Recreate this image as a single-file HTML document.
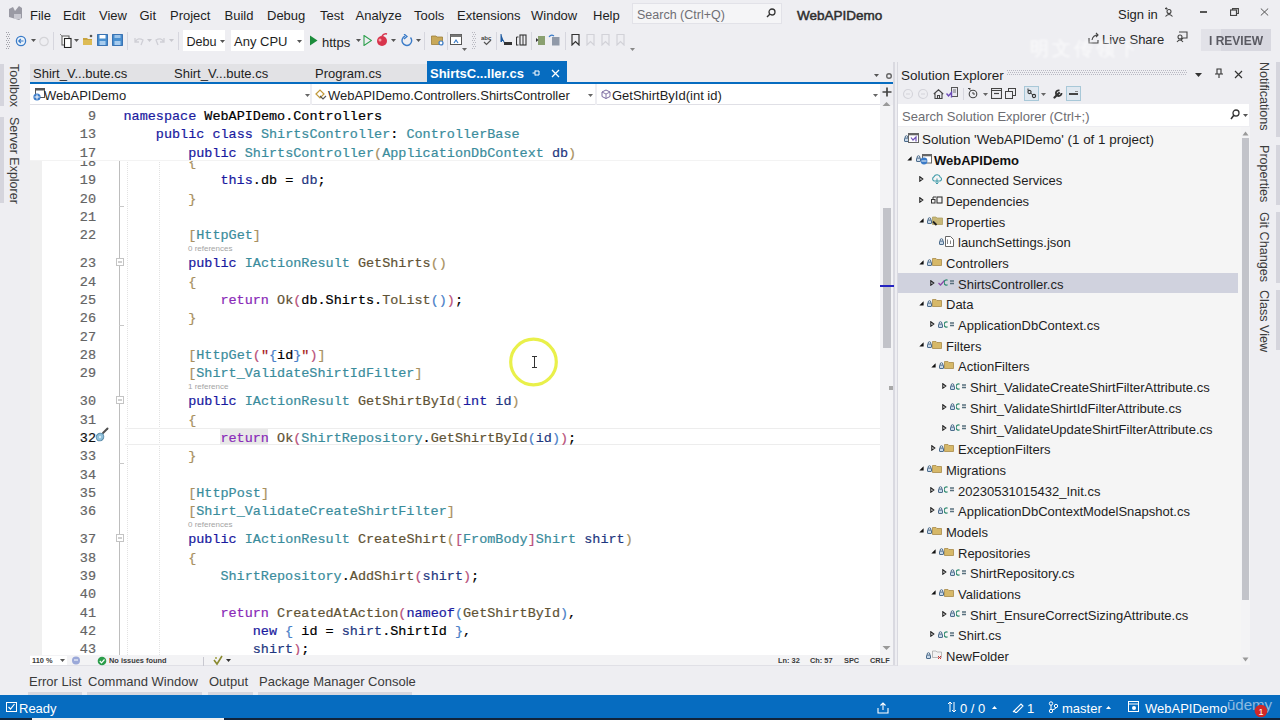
<!DOCTYPE html>
<html><head><meta charset="utf-8"><style>
html,body{margin:0;padding:0;}
body{width:1280px;height:720px;overflow:hidden;position:relative;background:#EEEEF2;font-family:"Liberation Sans",sans-serif;}
.r{position:absolute;}
.t{position:absolute;white-space:pre;line-height:0;height:0;}
.t span{display:inline-block;line-height:normal;transform:translateY(-78%);}
.code{position:absolute;white-space:pre;font-family:"Liberation Mono",monospace;font-size:13.47px;line-height:0;height:0;-webkit-text-stroke:0.2px;}
.code span.l{display:inline-block;line-height:normal;transform:translateY(-78%);}
</style></head><body>

<svg class="r" style="left:7px;top:5px;" width="16" height="16" viewBox="0 0 16 16"><path d="M2 4 L6 2 L8 6 L12 1 L15 3 L15 13 L12 15 L2 12 Z" fill="#9a9aa4"/><rect x="7" y="9" width="7" height="5" fill="#c8c8d0"/></svg>
<div class="t" style="left:30px;top:19.5px;font-size:13px;color:#1e1e1e;font-weight:normal;font-family:'Liberation Sans', sans-serif;"><span>File</span></div>
<div class="t" style="left:63px;top:19.5px;font-size:13px;color:#1e1e1e;font-weight:normal;font-family:'Liberation Sans', sans-serif;"><span>Edit</span></div>
<div class="t" style="left:99px;top:19.5px;font-size:13px;color:#1e1e1e;font-weight:normal;font-family:'Liberation Sans', sans-serif;"><span>View</span></div>
<div class="t" style="left:139.5px;top:19.5px;font-size:13px;color:#1e1e1e;font-weight:normal;font-family:'Liberation Sans', sans-serif;"><span>Git</span></div>
<div class="t" style="left:170px;top:19.5px;font-size:13px;color:#1e1e1e;font-weight:normal;font-family:'Liberation Sans', sans-serif;"><span>Project</span></div>
<div class="t" style="left:224.5px;top:19.5px;font-size:13px;color:#1e1e1e;font-weight:normal;font-family:'Liberation Sans', sans-serif;"><span>Build</span></div>
<div class="t" style="left:267px;top:19.5px;font-size:13px;color:#1e1e1e;font-weight:normal;font-family:'Liberation Sans', sans-serif;"><span>Debug</span></div>
<div class="t" style="left:320px;top:19.5px;font-size:13px;color:#1e1e1e;font-weight:normal;font-family:'Liberation Sans', sans-serif;"><span>Test</span></div>
<div class="t" style="left:355.5px;top:19.5px;font-size:13px;color:#1e1e1e;font-weight:normal;font-family:'Liberation Sans', sans-serif;"><span>Analyze</span></div>
<div class="t" style="left:414px;top:19.5px;font-size:13px;color:#1e1e1e;font-weight:normal;font-family:'Liberation Sans', sans-serif;"><span>Tools</span></div>
<div class="t" style="left:457px;top:19.5px;font-size:13px;color:#1e1e1e;font-weight:normal;font-family:'Liberation Sans', sans-serif;"><span>Extensions</span></div>
<div class="t" style="left:531px;top:19.5px;font-size:13px;color:#1e1e1e;font-weight:normal;font-family:'Liberation Sans', sans-serif;"><span>Window</span></div>
<div class="t" style="left:593px;top:19.5px;font-size:13px;color:#1e1e1e;font-weight:normal;font-family:'Liberation Sans', sans-serif;"><span>Help</span></div>
<div class="r" style="left:632px;top:3px;width:150px;height:21px;background:#F5F5F7;box-sizing:border-box;border:1px solid #E2E2E8;"></div>
<div class="t" style="left:637px;top:19px;font-size:12.5px;color:#6f6f75;font-weight:normal;font-family:'Liberation Sans', sans-serif;"><span>Search (Ctrl+Q)</span></div>
<svg class="r" style="left:765px;top:7px;" width="12" height="12" viewBox="0 0 12 12"><circle cx="7" cy="5" r="3" fill="none" stroke="#333" stroke-width="1.3"/><line x1="5" y1="7" x2="2" y2="10" stroke="#333" stroke-width="1.5"/></svg>
<div class="t" style="left:797px;top:20px;font-size:13.5px;color:#2e2e2e;font-weight:normal;font-family:'Liberation Sans', sans-serif;-webkit-text-stroke:0.5px #2e2e2e;"><span>WebAPIDemo</span></div>
<div class="t" style="left:1118px;top:19px;font-size:13px;color:#1e1e1e;font-weight:normal;font-family:'Liberation Sans', sans-serif;"><span>Sign in</span></div>
<svg class="r" style="left:1164px;top:7px;" width="10" height="10" viewBox="0 0 10 10"><circle cx="5" cy="4.5" r="2" fill="none" stroke="#444" stroke-width="1.1"/><path d="M1.5 9.5 Q5 5.5 8.5 9.5" fill="none" stroke="#444" stroke-width="1.1"/><path d="M1 1.5 L3.5 1.5 M2.25 0.3 L2.25 2.7" stroke="#444" stroke-width="1"/></svg>
<div class="r" style="left:1200px;top:11px;width:7px;height:1.5px;background:#555;"></div>
<svg class="r" style="left:1230px;top:8px;" width="9" height="8" viewBox="0 0 9 8"><rect x="0.5" y="2" width="6" height="5.5" fill="none" stroke="#444" stroke-width="1.2"/><path d="M2.5 2 V0.6 H8.4 V5.5 H6.5" fill="none" stroke="#444" stroke-width="1.1"/></svg>
<svg class="r" style="left:1260px;top:8px;" width="9" height="8" viewBox="0 0 9 8"><path d="M0.8 0.5 L8.2 7.5 M8.2 0.5 L0.8 7.5" stroke="#555" stroke-width="1"/></svg>
<svg class="r" style="left:6px;top:32px;" width="4" height="18" viewBox="0 0 4 18"><rect x="0" y="0" width="1" height="1" fill="#A0A0A8"/><rect x="2" y="0" width="1" height="1" fill="#A0A0A8"/><rect x="1" y="2" width="1" height="1" fill="#A0A0A8"/><rect x="3" y="2" width="1" height="1" fill="#A0A0A8"/><rect x="0" y="4" width="1" height="1" fill="#A0A0A8"/><rect x="2" y="4" width="1" height="1" fill="#A0A0A8"/><rect x="1" y="6" width="1" height="1" fill="#A0A0A8"/><rect x="3" y="6" width="1" height="1" fill="#A0A0A8"/><rect x="0" y="8" width="1" height="1" fill="#A0A0A8"/><rect x="2" y="8" width="1" height="1" fill="#A0A0A8"/><rect x="1" y="10" width="1" height="1" fill="#A0A0A8"/><rect x="3" y="10" width="1" height="1" fill="#A0A0A8"/><rect x="0" y="12" width="1" height="1" fill="#A0A0A8"/><rect x="2" y="12" width="1" height="1" fill="#A0A0A8"/><rect x="1" y="14" width="1" height="1" fill="#A0A0A8"/><rect x="3" y="14" width="1" height="1" fill="#A0A0A8"/><rect x="0" y="16" width="1" height="1" fill="#A0A0A8"/><rect x="2" y="16" width="1" height="1" fill="#A0A0A8"/></svg>
<svg class="r" style="left:15px;top:35px;" width="12" height="12" viewBox="0 0 12 12"><circle cx="6" cy="6" r="4.6" fill="#EAF2FA" stroke="#3A7BC8" stroke-width="1.3"/><path d="M8.5 6 H4 M5.8 4 L3.8 6 L5.8 8" fill="none" stroke="#3A7BC8" stroke-width="1.2"/></svg>
<svg class="r" style="left:31px;top:39px;" width="5" height="3" viewBox="0 0 5 3"><path d="M0 0 H5 L2.5 3 Z" fill="#555"/></svg>
<svg class="r" style="left:38px;top:35px;" width="12" height="12" viewBox="0 0 12 12"><circle cx="6" cy="6.5" r="4.2" fill="none" stroke="#D4D4D8" stroke-width="1.2"/></svg>
<div class="r" style="left:53px;top:32px;width:1px;height:18px;background:#D6D6DE;"></div>
<svg class="r" style="left:59px;top:33px;" width="13" height="15" viewBox="0 0 13 15"><rect x="3" y="3" width="7" height="9" fill="#fff" stroke="#555" stroke-width="1"/><rect x="5.5" y="5.5" width="6.5" height="9" fill="#fff" stroke="#222" stroke-width="1.1"/><path d="M1 1 L3 3" stroke="#888"/></svg>
<svg class="r" style="left:74px;top:39px;" width="5" height="3" viewBox="0 0 5 3"><path d="M0 0 H5 L2.5 3 Z" fill="#555"/></svg>
<svg class="r" style="left:82px;top:34px;" width="11" height="12" viewBox="0 0 11 12"><path d="M1 4 H5 L6 5 H10 V11 H1 Z" fill="#C8A440"/><path d="M1 6 H10 V11 H1Z" fill="#DDBB55"/><circle cx="9" cy="2" r="1.3" fill="#555"/></svg>
<svg class="r" style="left:97px;top:34px;" width="11" height="12" viewBox="0 0 11 12"><rect x="0.6" y="0.6" width="9.8" height="10.8" fill="#4A90D0" stroke="#2E6AAE" stroke-width="1"/><rect x="2.5" y="1" width="6" height="3.5" fill="#fff"/><rect x="2.5" y="7" width="6" height="4" fill="#A8CCEE"/></svg>
<svg class="r" style="left:112px;top:34px;" width="11" height="12" viewBox="0 0 11 12"><rect x="0.6" y="0.6" width="9.8" height="10.8" fill="#4A90D0" stroke="#2E6AAE" stroke-width="1"/><rect x="2.5" y="7" width="6" height="4" fill="#A8CCEE"/><rect x="2.5" y="1" width="6" height="3" fill="#9CC4EA"/></svg>
<div class="r" style="left:127px;top:32px;width:1px;height:18px;background:#D6D6DE;"></div>
<svg class="r" style="left:133px;top:35px;" width="12" height="12" viewBox="0 0 12 12"><path d="M2 3 V7 H6 M2.5 6.5 Q5 2 10 5 L8 10" fill="none" stroke="#CFCFD6" stroke-width="1.3"/></svg>
<svg class="r" style="left:147px;top:39px;" width="5" height="3" viewBox="0 0 5 3"><path d="M0 0 H5 L2.5 3 Z" fill="#C8C8CE"/></svg>
<svg class="r" style="left:154px;top:35px;" width="12" height="12" viewBox="0 0 12 12"><path d="M10 3 V7 H6 M9.5 6.5 Q7 2 2 5 L4 10" fill="none" stroke="#CFCFD6" stroke-width="1.3"/></svg>
<svg class="r" style="left:169px;top:39px;" width="5" height="3" viewBox="0 0 5 3"><path d="M0 0 H5 L2.5 3 Z" fill="#C8C8CE"/></svg>
<div class="r" style="left:178px;top:32px;width:1px;height:18px;background:#D6D6DE;"></div>
<div class="r" style="left:183px;top:30px;width:42px;height:21px;background:#FFFFFF;"></div>
<div class="t" style="left:186.5px;top:46px;font-size:12.6px;color:#1e1e1e;font-weight:normal;font-family:'Liberation Sans', sans-serif;"><span>Debu</span></div>
<svg class="r" style="left:220px;top:40px;" width="5" height="3" viewBox="0 0 5 3"><path d="M0 0 H5 L2.5 3 Z" fill="#555"/></svg>
<div class="r" style="left:231px;top:30px;width:73px;height:21px;background:#FFFFFF;"></div>
<div class="t" style="left:234px;top:46px;font-size:13px;color:#1e1e1e;font-weight:normal;font-family:'Liberation Sans', sans-serif;"><span>Any CPU</span></div>
<svg class="r" style="left:297px;top:40px;" width="5" height="3" viewBox="0 0 5 3"><path d="M0 0 H5 L2.5 3 Z" fill="#555"/></svg>
<svg class="r" style="left:309px;top:35px;" width="9" height="11" viewBox="0 0 9 11"><path d="M1 0.5 L8.5 5.5 L1 10.5 Z" fill="#1C8C3C"/></svg>
<div class="t" style="left:322px;top:46.5px;font-size:13px;color:#1e1e1e;font-weight:normal;font-family:'Liberation Sans', sans-serif;"><span>https</span></div>
<svg class="r" style="left:356px;top:39px;" width="5" height="3" viewBox="0 0 5 3"><path d="M0 0 H5 L2.5 3 Z" fill="#555"/></svg>
<svg class="r" style="left:363px;top:35px;" width="9" height="11" viewBox="0 0 9 11"><path d="M1 0.5 L8.5 5.5 L1 10.5 Z" fill="none" stroke="#2EA04E" stroke-width="1.1"/></svg>
<svg class="r" style="left:376px;top:33px;" width="13" height="14" viewBox="0 0 13 14"><circle cx="6" cy="8" r="5" fill="#D8344C"/><path d="M6 3 Q8 0 11 1" fill="none" stroke="#D8344C" stroke-width="1.4"/><circle cx="4" cy="7" r="1.5" fill="#F7A0A8"/></svg>
<svg class="r" style="left:391px;top:39px;" width="5" height="3" viewBox="0 0 5 3"><path d="M0 0 H5 L2.5 3 Z" fill="#555"/></svg>
<svg class="r" style="left:401px;top:34px;" width="12" height="13" viewBox="0 0 12 13"><path d="M9.5 3.5 A4.8 4.8 0 1 1 4 2.2" fill="none" stroke="#3A7BC8" stroke-width="1.4"/><path d="M3 0 L6 2.5 L3 5" fill="none" stroke="#3A7BC8" stroke-width="1.3"/></svg>
<svg class="r" style="left:416px;top:39px;" width="5" height="3" viewBox="0 0 5 3"><path d="M0 0 H5 L2.5 3 Z" fill="#555"/></svg>
<div class="r" style="left:424px;top:32px;width:1px;height:18px;background:#D6D6DE;"></div>
<svg class="r" style="left:431px;top:34px;" width="13" height="12" viewBox="0 0 13 12"><path d="M0.5 2 H5 L6 3 H11.5 V10.5 H0.5Z" fill="#C8A858" stroke="#9C7E3A" stroke-width="0.8"/><circle cx="10" cy="9" r="2" fill="#fff" stroke="#3A7BC8" stroke-width="1.2"/></svg>
<div class="r" style="left:447px;top:32px;width:1px;height:18px;background:#D6D6DE;"></div>
<svg class="r" style="left:450px;top:34px;" width="12" height="11" viewBox="0 0 12 11"><rect x="0.5" y="0.5" width="11" height="10" fill="#fff" stroke="#555" stroke-width="1"/><rect x="0.5" y="0.5" width="11" height="2.5" fill="#777"/><path d="M4 9 L6 6 L8 9" fill="none" stroke="#3A7BC8" stroke-width="1.2"/></svg>
<svg class="r" style="left:462px;top:48px;" width="5" height="3" viewBox="0 0 5 3"><path d="M0 0 H5 L2.5 3 Z" fill="#666"/></svg>
<svg class="r" style="left:472px;top:32px;" width="4" height="18" viewBox="0 0 4 18"><rect x="0" y="0" width="1" height="1" fill="#B8B8C0"/><rect x="2" y="0" width="1" height="1" fill="#B8B8C0"/><rect x="1" y="2" width="1" height="1" fill="#B8B8C0"/><rect x="3" y="2" width="1" height="1" fill="#B8B8C0"/><rect x="0" y="4" width="1" height="1" fill="#B8B8C0"/><rect x="2" y="4" width="1" height="1" fill="#B8B8C0"/><rect x="1" y="6" width="1" height="1" fill="#B8B8C0"/><rect x="3" y="6" width="1" height="1" fill="#B8B8C0"/><rect x="0" y="8" width="1" height="1" fill="#B8B8C0"/><rect x="2" y="8" width="1" height="1" fill="#B8B8C0"/><rect x="1" y="10" width="1" height="1" fill="#B8B8C0"/><rect x="3" y="10" width="1" height="1" fill="#B8B8C0"/><rect x="0" y="12" width="1" height="1" fill="#B8B8C0"/><rect x="2" y="12" width="1" height="1" fill="#B8B8C0"/><rect x="1" y="14" width="1" height="1" fill="#B8B8C0"/><rect x="3" y="14" width="1" height="1" fill="#B8B8C0"/><rect x="0" y="16" width="1" height="1" fill="#B8B8C0"/><rect x="2" y="16" width="1" height="1" fill="#B8B8C0"/></svg>
<svg class="r" style="left:481px;top:34px;" width="12" height="12" viewBox="0 0 12 12"><text x="0" y="5.5" font-size="6" font-family="Liberation Sans" font-weight="bold" fill="#444">abc</text><path d="M3 8 L5.5 10.5 L10 6" fill="none" stroke="#555" stroke-width="1.2"/></svg>
<div class="r" style="left:496px;top:32px;width:1px;height:18px;background:#D6D6DE;"></div>
<svg class="r" style="left:500px;top:34px;" width="13" height="12" viewBox="0 0 13 12"><path d="M1 0 L1 8 L3 6 L5 10" fill="#1E5AA0" stroke="#1E5AA0" stroke-width="1"/><rect x="4" y="8" width="8" height="3" fill="#333"/></svg>
<svg class="r" style="left:516px;top:34px;" width="11" height="12" viewBox="0 0 11 12"><path d="M0.5 3 H2.5 M0.5 3 V11 H2.5" fill="none" stroke="#333" stroke-width="1.1"/><rect x="4" y="1" width="6" height="10" fill="none" stroke="#333" stroke-width="1.1"/><path d="M7 1 V11" stroke="#333" stroke-width="1"/></svg>
<div class="r" style="left:531px;top:32px;width:1px;height:18px;background:#D6D6DE;"></div>
<svg class="r" style="left:536px;top:35px;" width="10" height="11" viewBox="0 0 10 11"><rect x="2" y="1" width="7" height="9" fill="#8AA070"/><path d="M0 3 L2.5 5 L0 7" fill="#333"/></svg>
<svg class="r" style="left:548px;top:34px;" width="12" height="12" viewBox="0 0 12 12"><path d="M1 3 Q3 0 6 2" fill="none" stroke="#3A7BC8" stroke-width="1.2"/><rect x="4" y="3" width="7.5" height="8.5" fill="#9099A8"/></svg>
<div class="r" style="left:565px;top:32px;width:1px;height:18px;background:#D6D6DE;"></div>
<svg class="r" style="left:571px;top:34px;" width="9" height="12" viewBox="0 0 9 12"><path d="M1 0.5 H8 V11 L4.5 7.5 L1 11 Z" fill="none" stroke="#333" stroke-width="1.2"/></svg>
<svg class="r" style="left:586px;top:34px;" width="11" height="12" viewBox="0 0 11 12"><path d="M1 0.5 H8 V11 L4.5 7.5 L1 11 Z" fill="none" stroke="#D2D2D8" stroke-width="1.2"/></svg>
<svg class="r" style="left:601px;top:34px;" width="11" height="12" viewBox="0 0 11 12"><path d="M1 0.5 H8 V11 L4.5 7.5 L1 11 Z" fill="none" stroke="#D2D2D8" stroke-width="1.2"/></svg>
<svg class="r" style="left:616px;top:34px;" width="11" height="12" viewBox="0 0 11 12"><path d="M1 0.5 H8 V11 L4.5 7.5 L1 11 Z" fill="none" stroke="#D2D2D8" stroke-width="1.2"/></svg>
<svg class="r" style="left:630px;top:48px;" width="5" height="3" viewBox="0 0 5 3"><path d="M0 0 H5 L2.5 3 Z" fill="#888"/></svg>
<svg class="r" style="left:1088px;top:32px;" width="12" height="12" viewBox="0 0 12 12"><path d="M1 6 V11 H10 V8" fill="none" stroke="#444" stroke-width="1.1"/><path d="M4 8 Q5 3 10 3 M8 1 L10 3 L8 5" fill="none" stroke="#444" stroke-width="1.1"/></svg>
<div class="t" style="left:1102px;top:44px;font-size:13px;color:#2a2a2a;font-weight:normal;font-family:'Liberation Sans', sans-serif;"><span>Live Share</span></div>
<svg class="r" style="left:1176px;top:31px;" width="12" height="12" viewBox="0 0 12 12"><path d="M3 1 H11 V7 H7 L5 9" fill="none" stroke="#444" stroke-width="1.1"/><circle cx="4" cy="6" r="2" fill="none" stroke="#444" stroke-width="1.1"/><path d="M1 11 Q4 7 7 11" fill="none" stroke="#444" stroke-width="1.1"/></svg>
<div class="r" style="left:1201px;top:29px;width:70px;height:22px;background:#D8D8E0;"></div>
<div class="r" style="left:1201px;top:29px;width:20px;height:22px;background:#E2E2E8;"></div>
<div class="t" style="left:1209px;top:45px;font-size:12px;color:#5A5A62;font-weight:bold;font-family:'Liberation Sans', sans-serif;filter:blur(0.4px);"><span>I REVIEW</span></div>
<div class="t" style="left:1030px;top:56px;font-size:19px;color:rgba(255,255,255,0.55);font-weight:bold;font-family:'Liberation Sans', sans-serif;letter-spacing:3px;filter:blur(1px);"><span>明文传领下</span></div>
<div class="r" style="left:0px;top:64px;width:4px;height:42px;background:#D5D5DD;"></div>
<div class="r" style="left:0px;top:117px;width:4px;height:86px;background:#D5D5DD;"></div>
<div class="r" style="left:20px;top:64px;transform-origin:0 0;transform:rotate(90deg);font-size:12.5px;color:#3c3c3c;white-space:pre;line-height:13px;">Toolbox</div>
<div class="r" style="left:20px;top:117px;transform-origin:0 0;transform:rotate(90deg);font-size:12.5px;color:#3c3c3c;white-space:pre;line-height:13px;">Server Explorer</div>
<div class="r" style="left:30px;top:64px;width:397px;height:18px;background:#E2E2E5;"></div>
<div class="t" style="left:33px;top:78px;font-size:13px;color:#1e1e1e;font-weight:normal;font-family:'Liberation Sans', sans-serif;"><span>Shirt_V...bute.cs</span></div>
<div class="t" style="left:174px;top:78px;font-size:13px;color:#1e1e1e;font-weight:normal;font-family:'Liberation Sans', sans-serif;"><span>Shirt_V...bute.cs</span></div>
<div class="t" style="left:315px;top:78px;font-size:13px;color:#1e1e1e;font-weight:normal;font-family:'Liberation Sans', sans-serif;"><span>Program.cs</span></div>
<div class="r" style="left:427px;top:61px;width:140px;height:22px;background:#066CC0;"></div>
<div class="t" style="left:430px;top:78px;font-size:13px;color:#FFFFFF;font-weight:bold;font-family:'Liberation Sans', sans-serif;"><span>ShirtsC...ller.cs</span></div>
<svg class="r" style="left:532px;top:69px;" width="8" height="8" viewBox="0 0 8 8"><path d="M0.5 4 H3 M3 1.5 V6.5 M3 2 H7 V6 H3" fill="none" stroke="#fff" stroke-width="1"/></svg>
<svg class="r" style="left:551px;top:69px;" width="9" height="9" viewBox="0 0 9 9"><path d="M1 1 L8 8 M8 1 L1 8" stroke="#fff" stroke-width="1.3"/></svg>
<div class="r" style="left:30px;top:82px;width:864px;height:2px;background:#066CC0;"></div>
<svg class="r" style="left:874px;top:74px;" width="6" height="4" viewBox="0 0 6 4"><path d="M0 0 H5 L2.5 3 Z" fill="#555"/></svg>
<svg class="r" style="left:885px;top:72px;" width="8" height="8" viewBox="0 0 8 8"><circle cx="4" cy="4" r="2.3" fill="none" stroke="#666" stroke-width="1.4"/></svg>
<div class="r" style="left:30px;top:84px;width:850px;height:21px;background:#FFFFFF;"></div>
<div class="r" style="left:30px;top:104px;width:850px;height:1px;background:#E0E0E6;"></div>
<div class="r" style="left:310px;top:84px;width:2px;height:21px;background:#EEEEF2;"></div>
<div class="r" style="left:595px;top:84px;width:2px;height:21px;background:#EEEEF2;"></div>
<svg class="r" style="left:32px;top:88px;" width="14" height="14" viewBox="0 0 14 14"><rect x="3.5" y="0.5" width="9" height="9" fill="#fff" stroke="#555" stroke-width="1"/><rect x="3.5" y="0.5" width="9" height="2" fill="#555"/><circle cx="5" cy="9" r="3.6" fill="#3A7BC8"/><path d="M2.5 9 H7.5 M5 6.5 V11.5" stroke="#fff" stroke-width="1"/></svg>
<div class="t" style="left:44px;top:100px;font-size:13px;color:#1e1e1e;font-weight:normal;font-family:'Liberation Sans', sans-serif;"><span>WebAPIDemo</span></div>
<svg class="r" style="left:305px;top:94px;" width="5" height="3" viewBox="0 0 5 3"><path d="M0 0 H5 L2.5 3 Z" fill="#666"/></svg>
<svg class="r" style="left:314px;top:88px;" width="14" height="14" viewBox="0 0 14 14"><path d="M2 6 L6 2 L10 6 L6 10 Z" fill="none" stroke="#C29A3A" stroke-width="1.2"/><path d="M6 8 L9 11 L12 8" fill="none" stroke="#555" stroke-width="1.1"/></svg>
<div class="t" style="left:328px;top:100px;font-size:13px;color:#1e1e1e;font-weight:normal;font-family:'Liberation Sans', sans-serif;"><span>WebAPIDemo.Controllers.ShirtsController</span></div>
<svg class="r" style="left:588px;top:94px;" width="5" height="3" viewBox="0 0 5 3"><path d="M0 0 H5 L2.5 3 Z" fill="#666"/></svg>
<svg class="r" style="left:601px;top:89px;" width="10" height="11" viewBox="0 0 10 11"><path d="M5 1 L9 3 V7.5 L5 9.5 L1 7.5 V3 Z" fill="none" stroke="#7A6AA0" stroke-width="1"/><path d="M1 3 L5 5 L9 3 M5 5 V9.5" fill="none" stroke="#7A6AA0" stroke-width="0.9"/></svg>
<div class="t" style="left:612px;top:100px;font-size:13px;color:#1e1e1e;font-weight:normal;font-family:'Liberation Sans', sans-serif;"><span>GetShirtById(int id)</span></div>
<svg class="r" style="left:873px;top:94px;" width="5" height="3" viewBox="0 0 5 3"><path d="M0 0 H5 L2.5 3 Z" fill="#666"/></svg>
<svg class="r" style="left:881px;top:86px;" width="12" height="12" viewBox="0 0 12 12"><path d="M6 1.5 V10.5 M1.5 6 H10.5" stroke="#444" stroke-width="1.7"/></svg>
<div class="r" style="left:30px;top:105px;width:850px;height:550px;background:#FFFFFF;"></div>
<div class="r" style="left:30px;top:160px;width:12px;height:495px;background:#F0F0F0;"></div>
<div class="r" style="left:127px;top:160px;width:0;height:495px;border-left:1px dotted #E2E2E2;"></div>
<div class="r" style="left:159px;top:160px;width:0;height:495px;border-left:1px dotted #E2E2E2;"></div>
<div class="r" style="left:119px;top:160px;width:1px;height:495px;background:#BDBDBD;"></div>
<div class="r" style="left:125px;top:428px;width:755px;height:1px;background:#EDEDED;"></div>
<div class="r" style="left:125px;top:444px;width:755px;height:1px;background:#EDEDED;"></div>
<div class="r" style="left:220px;top:429px;width:48px;height:15px;background:#E8E8E8;"></div>
<div class="code" style="left:79.84px;top:167.0px;color:#646464"><span class="l">18</span></div>
<div class="code" style="left:188.14px;top:167.0px;"><span class="l"><span style="color:#A89060">{</span></span></div>
<div class="code" style="left:79.84px;top:185.32999999999998px;color:#646464"><span class="l">19</span></div>
<div class="code" style="left:220.46px;top:185.32999999999998px;"><span class="l"><span style="color:#1A1AA0">this</span><span style="color:#000000">.db = </span><span style="color:#1F377F">db</span><span style="color:#000000">;</span></span></div>
<div class="code" style="left:79.84px;top:203.66px;color:#646464"><span class="l">20</span></div>
<div class="code" style="left:188.14px;top:203.66px;"><span class="l"><span style="color:#A89060">}</span></span></div>
<div class="code" style="left:79.84px;top:221.99px;color:#646464"><span class="l">21</span></div>
<div class="code" style="left:79.84px;top:240.32px;color:#646464"><span class="l">22</span></div>
<div class="code" style="left:188.14px;top:240.32px;"><span class="l"><span style="color:#A89060">[</span><span style="color:#3A8C9C">HttpGet</span><span style="color:#A89060">]</span></span></div>
<div class="code" style="left:79.84px;top:268.32px;color:#646464"><span class="l">23</span></div>
<div class="code" style="left:188.14px;top:268.32px;"><span class="l"><span style="color:#1A1AA0">public</span><span style="color:#000000"> </span><span style="color:#3A8C9C">IActionResult</span><span style="color:#000000"> </span><span style="color:#5F5335">GetShirts</span><span style="color:#A89060">()</span></span></div>
<div class="code" style="left:79.84px;top:286.65000000000003px;color:#646464"><span class="l">24</span></div>
<div class="code" style="left:188.14px;top:286.65000000000003px;"><span class="l"><span style="color:#A89060">{</span></span></div>
<div class="code" style="left:79.84px;top:304.98px;color:#646464"><span class="l">25</span></div>
<div class="code" style="left:220.46px;top:304.98px;"><span class="l"><span style="color:#8A2AB8">return</span><span style="color:#000000"> </span><span style="color:#5F5335">Ok</span><span style="color:#B8507A">(</span><span style="color:#000000">db.Shirts.</span><span style="color:#5F5335">ToList</span><span style="color:#4A80C8">()</span><span style="color:#B8507A">)</span><span style="color:#000000">;</span></span></div>
<div class="code" style="left:79.84px;top:323.31px;color:#646464"><span class="l">26</span></div>
<div class="code" style="left:188.14px;top:323.31px;"><span class="l"><span style="color:#A89060">}</span></span></div>
<div class="code" style="left:79.84px;top:341.64px;color:#646464"><span class="l">27</span></div>
<div class="code" style="left:79.84px;top:359.96999999999997px;color:#646464"><span class="l">28</span></div>
<div class="code" style="left:188.14px;top:359.96999999999997px;"><span class="l"><span style="color:#A89060">[</span><span style="color:#3A8C9C">HttpGet</span><span style="color:#B8507A">(</span><span style="color:#A31515">"</span><span style="color:#4A80C8">{</span><span style="color:#000000">id</span><span style="color:#4A80C8">}</span><span style="color:#A31515">"</span><span style="color:#B8507A">)</span><span style="color:#A89060">]</span></span></div>
<div class="code" style="left:79.84px;top:378.3px;color:#646464"><span class="l">29</span></div>
<div class="code" style="left:188.14px;top:378.3px;"><span class="l"><span style="color:#A89060">[</span><span style="color:#3A8C9C">Shirt_ValidateShirtIdFilter</span><span style="color:#A89060">]</span></span></div>
<div class="code" style="left:79.84px;top:406.3px;color:#646464"><span class="l">30</span></div>
<div class="code" style="left:188.14px;top:406.3px;"><span class="l"><span style="color:#1A1AA0">public</span><span style="color:#000000"> </span><span style="color:#3A8C9C">IActionResult</span><span style="color:#000000"> </span><span style="color:#5F5335">GetShirtById</span><span style="color:#A89060">(</span><span style="color:#1A1AA0">int</span><span style="color:#000000"> </span><span style="color:#1F377F">id</span><span style="color:#A89060">)</span></span></div>
<div class="code" style="left:79.84px;top:424.63px;color:#646464"><span class="l">31</span></div>
<div class="code" style="left:188.14px;top:424.63px;"><span class="l"><span style="color:#A89060">{</span></span></div>
<div class="code" style="left:79.84px;top:442.96000000000004px;color:#111111"><span class="l">32</span></div>
<div class="code" style="left:220.46px;top:442.96000000000004px;"><span class="l"><span style="color:#8A2AB8">return</span><span style="color:#000000"> </span><span style="color:#5F5335">Ok</span><span style="color:#B8507A">(</span><span style="color:#3A8C9C">ShirtRepository</span><span style="color:#000000">.</span><span style="color:#5F5335">GetShirtById</span><span style="color:#4A80C8">(</span><span style="color:#1F377F">id</span><span style="color:#4A80C8">)</span><span style="color:#B8507A">)</span><span style="color:#000000">;</span></span></div>
<div class="code" style="left:79.84px;top:461.29px;color:#646464"><span class="l">33</span></div>
<div class="code" style="left:188.14px;top:461.29px;"><span class="l"><span style="color:#A89060">}</span></span></div>
<div class="code" style="left:79.84px;top:479.62px;color:#646464"><span class="l">34</span></div>
<div class="code" style="left:79.84px;top:497.95px;color:#646464"><span class="l">35</span></div>
<div class="code" style="left:188.14px;top:497.95px;"><span class="l"><span style="color:#A89060">[</span><span style="color:#3A8C9C">HttpPost</span><span style="color:#A89060">]</span></span></div>
<div class="code" style="left:79.84px;top:516.28px;color:#646464"><span class="l">36</span></div>
<div class="code" style="left:188.14px;top:516.28px;"><span class="l"><span style="color:#A89060">[</span><span style="color:#3A8C9C">Shirt_ValidateCreateShirtFilter</span><span style="color:#A89060">]</span></span></div>
<div class="code" style="left:79.84px;top:544.2799999999999px;color:#646464"><span class="l">37</span></div>
<div class="code" style="left:188.14px;top:544.2799999999999px;"><span class="l"><span style="color:#1A1AA0">public</span><span style="color:#000000"> </span><span style="color:#3A8C9C">IActionResult</span><span style="color:#000000"> </span><span style="color:#5F5335">CreateShirt</span><span style="color:#A89060">(</span><span style="color:#B8507A">[</span><span style="color:#3A8C9C">FromBody</span><span style="color:#B8507A">]</span><span style="color:#3A8C9C">Shirt</span><span style="color:#000000"> </span><span style="color:#1F377F">shirt</span><span style="color:#A89060">)</span></span></div>
<div class="code" style="left:79.84px;top:562.6099999999998px;color:#646464"><span class="l">38</span></div>
<div class="code" style="left:188.14px;top:562.6099999999998px;"><span class="l"><span style="color:#A89060">{</span></span></div>
<div class="code" style="left:79.84px;top:580.9399999999998px;color:#646464"><span class="l">39</span></div>
<div class="code" style="left:220.46px;top:580.9399999999998px;"><span class="l"><span style="color:#3A8C9C">ShirtRepository</span><span style="color:#000000">.</span><span style="color:#5F5335">AddShirt</span><span style="color:#B8507A">(</span><span style="color:#1F377F">shirt</span><span style="color:#B8507A">)</span><span style="color:#000000">;</span></span></div>
<div class="code" style="left:79.84px;top:599.2699999999999px;color:#646464"><span class="l">40</span></div>
<div class="code" style="left:79.84px;top:617.5999999999998px;color:#646464"><span class="l">41</span></div>
<div class="code" style="left:220.46px;top:617.5999999999998px;"><span class="l"><span style="color:#8A2AB8">return</span><span style="color:#000000"> </span><span style="color:#5F5335">CreatedAtAction</span><span style="color:#B8507A">(</span><span style="color:#1A1AA0">nameof</span><span style="color:#4A80C8">(</span><span style="color:#5F5335">GetShirtById</span><span style="color:#4A80C8">)</span><span style="color:#000000">,</span></span></div>
<div class="code" style="left:79.84px;top:635.9299999999998px;color:#646464"><span class="l">42</span></div>
<div class="code" style="left:252.78px;top:635.9299999999998px;"><span class="l"><span style="color:#1A1AA0">new</span><span style="color:#000000"> </span><span style="color:#4A80C8">{</span><span style="color:#000000"> </span><span style="color:#000000">id</span><span style="color:#000000"> = </span><span style="color:#1F377F">shirt</span><span style="color:#000000">.ShirtId </span><span style="color:#4A80C8">}</span><span style="color:#000000">,</span></span></div>
<div class="code" style="left:79.84px;top:654.2599999999999px;color:#646464"><span class="l">43</span></div>
<div class="code" style="left:252.78px;top:654.2599999999999px;"><span class="l"><span style="color:#1F377F">shirt</span><span style="color:#B8507A">)</span><span style="color:#000000">;</span></span></div>
<div class="t" style="left:188px;top:251.32px;font-size:8px;color:#A4A4A4;"><span>0 references</span></div>
<div class="t" style="left:188px;top:389.3px;font-size:8px;color:#A4A4A4;"><span>1 reference</span></div>
<div class="t" style="left:188px;top:527.28px;font-size:8px;color:#A4A4A4;"><span>0 references</span></div>
<svg class="r" style="left:116px;top:258px;" width="8" height="8" viewBox="0 0 8 8"><rect x="0.5" y="0.5" width="7" height="7" fill="#fff" stroke="#C4C4C4"/><path d="M2 4 H6" stroke="#A0A0A0"/></svg>
<svg class="r" style="left:116px;top:396px;" width="8" height="8" viewBox="0 0 8 8"><rect x="0.5" y="0.5" width="7" height="7" fill="#fff" stroke="#C4C4C4"/><path d="M2 4 H6" stroke="#A0A0A0"/></svg>
<svg class="r" style="left:116px;top:534px;" width="8" height="8" viewBox="0 0 8 8"><rect x="0.5" y="0.5" width="7" height="7" fill="#fff" stroke="#C4C4C4"/><path d="M2 4 H6" stroke="#A0A0A0"/></svg>
<div class="r" style="left:119px;top:206px;width:5px;height:1px;background:#C8C8C8;"></div>
<div class="r" style="left:119px;top:325px;width:5px;height:1px;background:#C8C8C8;"></div>
<div class="r" style="left:119px;top:463px;width:5px;height:1px;background:#C8C8C8;"></div>
<div class="r" style="left:30px;top:105px;width:850px;height:56px;background:#FFFFFF;"></div>
<div class="r" style="left:30px;top:160px;width:850px;height:1px;background:#F3F3F3;"></div>
<div class="code" style="left:87.92px;top:120.8px;color:#646464"><span class="l">9</span></div>
<div class="code" style="left:123.5px;top:120.8px;"><span class="l"><span style="color:#1A1AA0">namespace</span><span style="color:#000000"> WebAPIDemo.Controllers</span></span></div>
<div class="code" style="left:79.84px;top:139.1px;color:#646464"><span class="l">13</span></div>
<div class="code" style="left:155.82px;top:139.1px;"><span class="l"><span style="color:#1A1AA0">public</span><span style="color:#000000"> </span><span style="color:#1A1AA0">class</span><span style="color:#000000"> </span><span style="color:#3A8C9C">ShirtsController</span><span style="color:#000000">: </span><span style="color:#3A8C9C">ControllerBase</span></span></div>
<div class="code" style="left:79.84px;top:157.5px;color:#646464"><span class="l">17</span></div>
<div class="code" style="left:188.14px;top:157.5px;"><span class="l"><span style="color:#1A1AA0">public</span><span style="color:#000000"> </span><span style="color:#3A8C9C">ShirtsController</span><span style="color:#A89060">(</span><span style="color:#3A8C9C">ApplicationDbContext</span><span style="color:#000000"> </span><span style="color:#1F377F">db</span><span style="color:#A89060">)</span></span></div>
<svg class="r" style="left:95px;top:427px;" width="14" height="15" viewBox="0 0 14 15"><path d="M8 6 L12.5 1.5" stroke="#505050" stroke-width="2" stroke-linecap="round"/><ellipse cx="5" cy="10" rx="3.6" ry="4" transform="rotate(40 5 10)" fill="#8FC0DA" stroke="#5A8AA8" stroke-width="1"/><circle cx="5" cy="10" r="1.2" fill="#D8ECF6"/></svg>
<div class="r" style="left:880px;top:105px;width:13px;height:560px;background:#F3F3F5;"></div>
<div class="r" style="left:893px;top:62px;width:2px;height:604px;background:#D9D9E0;"></div>
<div class="r" style="left:895px;top:62px;width:2px;height:604px;background:#EEEEF2;"></div>
<svg class="r" style="left:882px;top:101px;" width="9" height="6" viewBox="0 0 9 6"><path d="M0.5 5 L4.5 1 L8.5 5 Z" fill="#999"/></svg>
<div class="r" style="left:883px;top:208px;width:8px;height:140px;background:#C2C3C9;"></div>
<div class="r" style="left:880px;top:285px;width:14px;height:2px;background:#2424C0;"></div>
<div class="r" style="left:889px;top:386px;width:4px;height:4px;background:#A8A8A8;"></div>
<svg class="r" style="left:882px;top:645px;" width="9" height="6" viewBox="0 0 9 6"><path d="M0.5 1 L4.5 5 L8.5 1 Z" fill="#999"/></svg>
<svg class="r" style="left:506px;top:335px;" width="56" height="56" viewBox="0 0 56 56"><circle cx="27.5" cy="27" r="22.8" fill="none" stroke="#E9F04A" stroke-width="3.2"/></svg>
<svg class="r" style="left:531px;top:356px;" width="7" height="12" viewBox="0 0 7 12"><path d="M1 0.5 H6 M1 11.5 H6 M3.5 0.5 V11.5" stroke="#333" stroke-width="1"/></svg>
<div class="r" style="left:897px;top:62px;width:353px;height:604px;background:#EEEEF2;"></div>
<div class="r" style="left:897px;top:62px;width:1px;height:604px;background:#D9D9E0;"></div>
<div class="t" style="left:901px;top:80px;font-size:13.5px;color:#1e1e1e;font-weight:normal;font-family:'Liberation Sans', sans-serif;"><span>Solution Explorer</span></div>
<svg class="r" style="left:1007px;top:70px;" width="180" height="6" viewBox="0 0 180 6"><rect x="0" y="0" width="1" height="1" fill="#B8B8C2"/><rect x="1" y="2" width="1" height="1" fill="#B8B8C2"/><rect x="0" y="4" width="1" height="1" fill="#B8B8C2"/><rect x="2" y="0" width="1" height="1" fill="#B8B8C2"/><rect x="3" y="2" width="1" height="1" fill="#B8B8C2"/><rect x="2" y="4" width="1" height="1" fill="#B8B8C2"/><rect x="4" y="0" width="1" height="1" fill="#B8B8C2"/><rect x="5" y="2" width="1" height="1" fill="#B8B8C2"/><rect x="4" y="4" width="1" height="1" fill="#B8B8C2"/><rect x="6" y="0" width="1" height="1" fill="#B8B8C2"/><rect x="7" y="2" width="1" height="1" fill="#B8B8C2"/><rect x="6" y="4" width="1" height="1" fill="#B8B8C2"/><rect x="8" y="0" width="1" height="1" fill="#B8B8C2"/><rect x="9" y="2" width="1" height="1" fill="#B8B8C2"/><rect x="8" y="4" width="1" height="1" fill="#B8B8C2"/><rect x="10" y="0" width="1" height="1" fill="#B8B8C2"/><rect x="11" y="2" width="1" height="1" fill="#B8B8C2"/><rect x="10" y="4" width="1" height="1" fill="#B8B8C2"/><rect x="12" y="0" width="1" height="1" fill="#B8B8C2"/><rect x="13" y="2" width="1" height="1" fill="#B8B8C2"/><rect x="12" y="4" width="1" height="1" fill="#B8B8C2"/><rect x="14" y="0" width="1" height="1" fill="#B8B8C2"/><rect x="15" y="2" width="1" height="1" fill="#B8B8C2"/><rect x="14" y="4" width="1" height="1" fill="#B8B8C2"/><rect x="16" y="0" width="1" height="1" fill="#B8B8C2"/><rect x="17" y="2" width="1" height="1" fill="#B8B8C2"/><rect x="16" y="4" width="1" height="1" fill="#B8B8C2"/><rect x="18" y="0" width="1" height="1" fill="#B8B8C2"/><rect x="19" y="2" width="1" height="1" fill="#B8B8C2"/><rect x="18" y="4" width="1" height="1" fill="#B8B8C2"/><rect x="20" y="0" width="1" height="1" fill="#B8B8C2"/><rect x="21" y="2" width="1" height="1" fill="#B8B8C2"/><rect x="20" y="4" width="1" height="1" fill="#B8B8C2"/><rect x="22" y="0" width="1" height="1" fill="#B8B8C2"/><rect x="23" y="2" width="1" height="1" fill="#B8B8C2"/><rect x="22" y="4" width="1" height="1" fill="#B8B8C2"/><rect x="24" y="0" width="1" height="1" fill="#B8B8C2"/><rect x="25" y="2" width="1" height="1" fill="#B8B8C2"/><rect x="24" y="4" width="1" height="1" fill="#B8B8C2"/><rect x="26" y="0" width="1" height="1" fill="#B8B8C2"/><rect x="27" y="2" width="1" height="1" fill="#B8B8C2"/><rect x="26" y="4" width="1" height="1" fill="#B8B8C2"/><rect x="28" y="0" width="1" height="1" fill="#B8B8C2"/><rect x="29" y="2" width="1" height="1" fill="#B8B8C2"/><rect x="28" y="4" width="1" height="1" fill="#B8B8C2"/><rect x="30" y="0" width="1" height="1" fill="#B8B8C2"/><rect x="31" y="2" width="1" height="1" fill="#B8B8C2"/><rect x="30" y="4" width="1" height="1" fill="#B8B8C2"/><rect x="32" y="0" width="1" height="1" fill="#B8B8C2"/><rect x="33" y="2" width="1" height="1" fill="#B8B8C2"/><rect x="32" y="4" width="1" height="1" fill="#B8B8C2"/><rect x="34" y="0" width="1" height="1" fill="#B8B8C2"/><rect x="35" y="2" width="1" height="1" fill="#B8B8C2"/><rect x="34" y="4" width="1" height="1" fill="#B8B8C2"/><rect x="36" y="0" width="1" height="1" fill="#B8B8C2"/><rect x="37" y="2" width="1" height="1" fill="#B8B8C2"/><rect x="36" y="4" width="1" height="1" fill="#B8B8C2"/><rect x="38" y="0" width="1" height="1" fill="#B8B8C2"/><rect x="39" y="2" width="1" height="1" fill="#B8B8C2"/><rect x="38" y="4" width="1" height="1" fill="#B8B8C2"/><rect x="40" y="0" width="1" height="1" fill="#B8B8C2"/><rect x="41" y="2" width="1" height="1" fill="#B8B8C2"/><rect x="40" y="4" width="1" height="1" fill="#B8B8C2"/><rect x="42" y="0" width="1" height="1" fill="#B8B8C2"/><rect x="43" y="2" width="1" height="1" fill="#B8B8C2"/><rect x="42" y="4" width="1" height="1" fill="#B8B8C2"/><rect x="44" y="0" width="1" height="1" fill="#B8B8C2"/><rect x="45" y="2" width="1" height="1" fill="#B8B8C2"/><rect x="44" y="4" width="1" height="1" fill="#B8B8C2"/><rect x="46" y="0" width="1" height="1" fill="#B8B8C2"/><rect x="47" y="2" width="1" height="1" fill="#B8B8C2"/><rect x="46" y="4" width="1" height="1" fill="#B8B8C2"/><rect x="48" y="0" width="1" height="1" fill="#B8B8C2"/><rect x="49" y="2" width="1" height="1" fill="#B8B8C2"/><rect x="48" y="4" width="1" height="1" fill="#B8B8C2"/><rect x="50" y="0" width="1" height="1" fill="#B8B8C2"/><rect x="51" y="2" width="1" height="1" fill="#B8B8C2"/><rect x="50" y="4" width="1" height="1" fill="#B8B8C2"/><rect x="52" y="0" width="1" height="1" fill="#B8B8C2"/><rect x="53" y="2" width="1" height="1" fill="#B8B8C2"/><rect x="52" y="4" width="1" height="1" fill="#B8B8C2"/><rect x="54" y="0" width="1" height="1" fill="#B8B8C2"/><rect x="55" y="2" width="1" height="1" fill="#B8B8C2"/><rect x="54" y="4" width="1" height="1" fill="#B8B8C2"/><rect x="56" y="0" width="1" height="1" fill="#B8B8C2"/><rect x="57" y="2" width="1" height="1" fill="#B8B8C2"/><rect x="56" y="4" width="1" height="1" fill="#B8B8C2"/><rect x="58" y="0" width="1" height="1" fill="#B8B8C2"/><rect x="59" y="2" width="1" height="1" fill="#B8B8C2"/><rect x="58" y="4" width="1" height="1" fill="#B8B8C2"/><rect x="60" y="0" width="1" height="1" fill="#B8B8C2"/><rect x="61" y="2" width="1" height="1" fill="#B8B8C2"/><rect x="60" y="4" width="1" height="1" fill="#B8B8C2"/><rect x="62" y="0" width="1" height="1" fill="#B8B8C2"/><rect x="63" y="2" width="1" height="1" fill="#B8B8C2"/><rect x="62" y="4" width="1" height="1" fill="#B8B8C2"/><rect x="64" y="0" width="1" height="1" fill="#B8B8C2"/><rect x="65" y="2" width="1" height="1" fill="#B8B8C2"/><rect x="64" y="4" width="1" height="1" fill="#B8B8C2"/><rect x="66" y="0" width="1" height="1" fill="#B8B8C2"/><rect x="67" y="2" width="1" height="1" fill="#B8B8C2"/><rect x="66" y="4" width="1" height="1" fill="#B8B8C2"/><rect x="68" y="0" width="1" height="1" fill="#B8B8C2"/><rect x="69" y="2" width="1" height="1" fill="#B8B8C2"/><rect x="68" y="4" width="1" height="1" fill="#B8B8C2"/><rect x="70" y="0" width="1" height="1" fill="#B8B8C2"/><rect x="71" y="2" width="1" height="1" fill="#B8B8C2"/><rect x="70" y="4" width="1" height="1" fill="#B8B8C2"/><rect x="72" y="0" width="1" height="1" fill="#B8B8C2"/><rect x="73" y="2" width="1" height="1" fill="#B8B8C2"/><rect x="72" y="4" width="1" height="1" fill="#B8B8C2"/><rect x="74" y="0" width="1" height="1" fill="#B8B8C2"/><rect x="75" y="2" width="1" height="1" fill="#B8B8C2"/><rect x="74" y="4" width="1" height="1" fill="#B8B8C2"/><rect x="76" y="0" width="1" height="1" fill="#B8B8C2"/><rect x="77" y="2" width="1" height="1" fill="#B8B8C2"/><rect x="76" y="4" width="1" height="1" fill="#B8B8C2"/><rect x="78" y="0" width="1" height="1" fill="#B8B8C2"/><rect x="79" y="2" width="1" height="1" fill="#B8B8C2"/><rect x="78" y="4" width="1" height="1" fill="#B8B8C2"/><rect x="80" y="0" width="1" height="1" fill="#B8B8C2"/><rect x="81" y="2" width="1" height="1" fill="#B8B8C2"/><rect x="80" y="4" width="1" height="1" fill="#B8B8C2"/><rect x="82" y="0" width="1" height="1" fill="#B8B8C2"/><rect x="83" y="2" width="1" height="1" fill="#B8B8C2"/><rect x="82" y="4" width="1" height="1" fill="#B8B8C2"/><rect x="84" y="0" width="1" height="1" fill="#B8B8C2"/><rect x="85" y="2" width="1" height="1" fill="#B8B8C2"/><rect x="84" y="4" width="1" height="1" fill="#B8B8C2"/><rect x="86" y="0" width="1" height="1" fill="#B8B8C2"/><rect x="87" y="2" width="1" height="1" fill="#B8B8C2"/><rect x="86" y="4" width="1" height="1" fill="#B8B8C2"/><rect x="88" y="0" width="1" height="1" fill="#B8B8C2"/><rect x="89" y="2" width="1" height="1" fill="#B8B8C2"/><rect x="88" y="4" width="1" height="1" fill="#B8B8C2"/><rect x="90" y="0" width="1" height="1" fill="#B8B8C2"/><rect x="91" y="2" width="1" height="1" fill="#B8B8C2"/><rect x="90" y="4" width="1" height="1" fill="#B8B8C2"/><rect x="92" y="0" width="1" height="1" fill="#B8B8C2"/><rect x="93" y="2" width="1" height="1" fill="#B8B8C2"/><rect x="92" y="4" width="1" height="1" fill="#B8B8C2"/><rect x="94" y="0" width="1" height="1" fill="#B8B8C2"/><rect x="95" y="2" width="1" height="1" fill="#B8B8C2"/><rect x="94" y="4" width="1" height="1" fill="#B8B8C2"/><rect x="96" y="0" width="1" height="1" fill="#B8B8C2"/><rect x="97" y="2" width="1" height="1" fill="#B8B8C2"/><rect x="96" y="4" width="1" height="1" fill="#B8B8C2"/><rect x="98" y="0" width="1" height="1" fill="#B8B8C2"/><rect x="99" y="2" width="1" height="1" fill="#B8B8C2"/><rect x="98" y="4" width="1" height="1" fill="#B8B8C2"/><rect x="100" y="0" width="1" height="1" fill="#B8B8C2"/><rect x="101" y="2" width="1" height="1" fill="#B8B8C2"/><rect x="100" y="4" width="1" height="1" fill="#B8B8C2"/><rect x="102" y="0" width="1" height="1" fill="#B8B8C2"/><rect x="103" y="2" width="1" height="1" fill="#B8B8C2"/><rect x="102" y="4" width="1" height="1" fill="#B8B8C2"/><rect x="104" y="0" width="1" height="1" fill="#B8B8C2"/><rect x="105" y="2" width="1" height="1" fill="#B8B8C2"/><rect x="104" y="4" width="1" height="1" fill="#B8B8C2"/><rect x="106" y="0" width="1" height="1" fill="#B8B8C2"/><rect x="107" y="2" width="1" height="1" fill="#B8B8C2"/><rect x="106" y="4" width="1" height="1" fill="#B8B8C2"/><rect x="108" y="0" width="1" height="1" fill="#B8B8C2"/><rect x="109" y="2" width="1" height="1" fill="#B8B8C2"/><rect x="108" y="4" width="1" height="1" fill="#B8B8C2"/><rect x="110" y="0" width="1" height="1" fill="#B8B8C2"/><rect x="111" y="2" width="1" height="1" fill="#B8B8C2"/><rect x="110" y="4" width="1" height="1" fill="#B8B8C2"/><rect x="112" y="0" width="1" height="1" fill="#B8B8C2"/><rect x="113" y="2" width="1" height="1" fill="#B8B8C2"/><rect x="112" y="4" width="1" height="1" fill="#B8B8C2"/><rect x="114" y="0" width="1" height="1" fill="#B8B8C2"/><rect x="115" y="2" width="1" height="1" fill="#B8B8C2"/><rect x="114" y="4" width="1" height="1" fill="#B8B8C2"/><rect x="116" y="0" width="1" height="1" fill="#B8B8C2"/><rect x="117" y="2" width="1" height="1" fill="#B8B8C2"/><rect x="116" y="4" width="1" height="1" fill="#B8B8C2"/><rect x="118" y="0" width="1" height="1" fill="#B8B8C2"/><rect x="119" y="2" width="1" height="1" fill="#B8B8C2"/><rect x="118" y="4" width="1" height="1" fill="#B8B8C2"/><rect x="120" y="0" width="1" height="1" fill="#B8B8C2"/><rect x="121" y="2" width="1" height="1" fill="#B8B8C2"/><rect x="120" y="4" width="1" height="1" fill="#B8B8C2"/><rect x="122" y="0" width="1" height="1" fill="#B8B8C2"/><rect x="123" y="2" width="1" height="1" fill="#B8B8C2"/><rect x="122" y="4" width="1" height="1" fill="#B8B8C2"/><rect x="124" y="0" width="1" height="1" fill="#B8B8C2"/><rect x="125" y="2" width="1" height="1" fill="#B8B8C2"/><rect x="124" y="4" width="1" height="1" fill="#B8B8C2"/><rect x="126" y="0" width="1" height="1" fill="#B8B8C2"/><rect x="127" y="2" width="1" height="1" fill="#B8B8C2"/><rect x="126" y="4" width="1" height="1" fill="#B8B8C2"/><rect x="128" y="0" width="1" height="1" fill="#B8B8C2"/><rect x="129" y="2" width="1" height="1" fill="#B8B8C2"/><rect x="128" y="4" width="1" height="1" fill="#B8B8C2"/><rect x="130" y="0" width="1" height="1" fill="#B8B8C2"/><rect x="131" y="2" width="1" height="1" fill="#B8B8C2"/><rect x="130" y="4" width="1" height="1" fill="#B8B8C2"/><rect x="132" y="0" width="1" height="1" fill="#B8B8C2"/><rect x="133" y="2" width="1" height="1" fill="#B8B8C2"/><rect x="132" y="4" width="1" height="1" fill="#B8B8C2"/><rect x="134" y="0" width="1" height="1" fill="#B8B8C2"/><rect x="135" y="2" width="1" height="1" fill="#B8B8C2"/><rect x="134" y="4" width="1" height="1" fill="#B8B8C2"/><rect x="136" y="0" width="1" height="1" fill="#B8B8C2"/><rect x="137" y="2" width="1" height="1" fill="#B8B8C2"/><rect x="136" y="4" width="1" height="1" fill="#B8B8C2"/><rect x="138" y="0" width="1" height="1" fill="#B8B8C2"/><rect x="139" y="2" width="1" height="1" fill="#B8B8C2"/><rect x="138" y="4" width="1" height="1" fill="#B8B8C2"/><rect x="140" y="0" width="1" height="1" fill="#B8B8C2"/><rect x="141" y="2" width="1" height="1" fill="#B8B8C2"/><rect x="140" y="4" width="1" height="1" fill="#B8B8C2"/><rect x="142" y="0" width="1" height="1" fill="#B8B8C2"/><rect x="143" y="2" width="1" height="1" fill="#B8B8C2"/><rect x="142" y="4" width="1" height="1" fill="#B8B8C2"/><rect x="144" y="0" width="1" height="1" fill="#B8B8C2"/><rect x="145" y="2" width="1" height="1" fill="#B8B8C2"/><rect x="144" y="4" width="1" height="1" fill="#B8B8C2"/><rect x="146" y="0" width="1" height="1" fill="#B8B8C2"/><rect x="147" y="2" width="1" height="1" fill="#B8B8C2"/><rect x="146" y="4" width="1" height="1" fill="#B8B8C2"/><rect x="148" y="0" width="1" height="1" fill="#B8B8C2"/><rect x="149" y="2" width="1" height="1" fill="#B8B8C2"/><rect x="148" y="4" width="1" height="1" fill="#B8B8C2"/><rect x="150" y="0" width="1" height="1" fill="#B8B8C2"/><rect x="151" y="2" width="1" height="1" fill="#B8B8C2"/><rect x="150" y="4" width="1" height="1" fill="#B8B8C2"/><rect x="152" y="0" width="1" height="1" fill="#B8B8C2"/><rect x="153" y="2" width="1" height="1" fill="#B8B8C2"/><rect x="152" y="4" width="1" height="1" fill="#B8B8C2"/><rect x="154" y="0" width="1" height="1" fill="#B8B8C2"/><rect x="155" y="2" width="1" height="1" fill="#B8B8C2"/><rect x="154" y="4" width="1" height="1" fill="#B8B8C2"/><rect x="156" y="0" width="1" height="1" fill="#B8B8C2"/><rect x="157" y="2" width="1" height="1" fill="#B8B8C2"/><rect x="156" y="4" width="1" height="1" fill="#B8B8C2"/><rect x="158" y="0" width="1" height="1" fill="#B8B8C2"/><rect x="159" y="2" width="1" height="1" fill="#B8B8C2"/><rect x="158" y="4" width="1" height="1" fill="#B8B8C2"/><rect x="160" y="0" width="1" height="1" fill="#B8B8C2"/><rect x="161" y="2" width="1" height="1" fill="#B8B8C2"/><rect x="160" y="4" width="1" height="1" fill="#B8B8C2"/><rect x="162" y="0" width="1" height="1" fill="#B8B8C2"/><rect x="163" y="2" width="1" height="1" fill="#B8B8C2"/><rect x="162" y="4" width="1" height="1" fill="#B8B8C2"/><rect x="164" y="0" width="1" height="1" fill="#B8B8C2"/><rect x="165" y="2" width="1" height="1" fill="#B8B8C2"/><rect x="164" y="4" width="1" height="1" fill="#B8B8C2"/><rect x="166" y="0" width="1" height="1" fill="#B8B8C2"/><rect x="167" y="2" width="1" height="1" fill="#B8B8C2"/><rect x="166" y="4" width="1" height="1" fill="#B8B8C2"/><rect x="168" y="0" width="1" height="1" fill="#B8B8C2"/><rect x="169" y="2" width="1" height="1" fill="#B8B8C2"/><rect x="168" y="4" width="1" height="1" fill="#B8B8C2"/><rect x="170" y="0" width="1" height="1" fill="#B8B8C2"/><rect x="171" y="2" width="1" height="1" fill="#B8B8C2"/><rect x="170" y="4" width="1" height="1" fill="#B8B8C2"/><rect x="172" y="0" width="1" height="1" fill="#B8B8C2"/><rect x="173" y="2" width="1" height="1" fill="#B8B8C2"/><rect x="172" y="4" width="1" height="1" fill="#B8B8C2"/><rect x="174" y="0" width="1" height="1" fill="#B8B8C2"/><rect x="175" y="2" width="1" height="1" fill="#B8B8C2"/><rect x="174" y="4" width="1" height="1" fill="#B8B8C2"/><rect x="176" y="0" width="1" height="1" fill="#B8B8C2"/><rect x="177" y="2" width="1" height="1" fill="#B8B8C2"/><rect x="176" y="4" width="1" height="1" fill="#B8B8C2"/><rect x="178" y="0" width="1" height="1" fill="#B8B8C2"/><rect x="179" y="2" width="1" height="1" fill="#B8B8C2"/><rect x="178" y="4" width="1" height="1" fill="#B8B8C2"/></svg>
<svg class="r" style="left:1195px;top:73px;" width="8" height="5" viewBox="0 0 8 5"><path d="M0 0 H7 L3.5 4 Z" fill="#333"/></svg>
<svg class="r" style="left:1215px;top:68px;" width="8" height="11" viewBox="0 0 8 11"><path d="M2 1 H6 V6 H2 Z M0 6 H8 M4 6 V10" fill="none" stroke="#333" stroke-width="1.1"/></svg>
<svg class="r" style="left:1234px;top:70px;" width="9" height="9" viewBox="0 0 9 9"><path d="M1 1 L8 8 M8 1 L1 8" stroke="#333" stroke-width="1.2"/></svg>
<svg class="r" style="left:902px;top:88px;" width="12" height="12" viewBox="0 0 12 12"><circle cx="6" cy="6" r="4.5" fill="none" stroke="#D4D4DA" stroke-width="1.1"/><path d="M8 6 H4" stroke="#D4D4DA"/></svg>
<svg class="r" style="left:917px;top:88px;" width="12" height="12" viewBox="0 0 12 12"><circle cx="6" cy="6" r="4.5" fill="none" stroke="#D4D4DA" stroke-width="1.1"/><path d="M4 6 H8" stroke="#D4D4DA"/></svg>
<svg class="r" style="left:933px;top:89px;" width="11" height="10" viewBox="0 0 11 10"><path d="M0.8 5 L5.5 0.8 L10.2 5 M2 4 V9.5 H9 V4 M4.5 9.5 V6.5 H6.5 V9.5" fill="none" stroke="#444" stroke-width="1.1"/></svg>
<svg class="r" style="left:946px;top:87px;" width="12" height="12" viewBox="0 0 12 12"><rect x="5.5" y="0.5" width="6" height="9" fill="#E8E8F0" stroke="#555"/><path d="M7 3 H10 M7 5 H10" stroke="#555" stroke-width="0.8"/><path d="M0.5 6.5 L2.5 9 L5.5 5.5 L5.5 10.5" fill="none" stroke="#6C4AB8" stroke-width="1.4"/></svg>
<div class="r" style="left:963px;top:88px;width:1px;height:12px;background:#D6D6DE;"></div>
<svg class="r" style="left:967px;top:87px;" width="11" height="12" viewBox="0 0 11 12"><circle cx="6" cy="7" r="3.8" fill="none" stroke="#444" stroke-width="1.1"/><path d="M6 5 V7 H8" fill="none" stroke="#444"/><path d="M1 1.5 L3.5 1.5 M2 1.5 L3.5 3.5" stroke="#444"/></svg>
<svg class="r" style="left:983px;top:93px;" width="5" height="3" viewBox="0 0 5 3"><path d="M0 0 H5 L2.5 3 Z" fill="#666"/></svg>
<svg class="r" style="left:991px;top:88px;" width="11" height="11" viewBox="0 0 11 11"><rect x="0.5" y="0.5" width="10" height="10" fill="none" stroke="#444" stroke-width="1.1"/><path d="M3 5.5 H8" stroke="#444" stroke-width="1.2"/><path d="M0.5 2.5 H10.5" stroke="#444"/></svg>
<svg class="r" style="left:1005px;top:88px;" width="11" height="11" viewBox="0 0 11 11"><rect x="3.5" y="0.5" width="7" height="7" fill="none" stroke="#444"/><rect x="0.5" y="3.5" width="7" height="7" fill="#EEEEF2" stroke="#444"/></svg>
<div class="r" style="left:1024px;top:86px;width:15px;height:15px;background:#E0E8F0;box-sizing:border-box;border:1px solid #A8C8D8;"></div>
<svg class="r" style="left:1026px;top:88px;" width="11" height="11" viewBox="0 0 11 11"><circle cx="3.5" cy="4" r="1.6" fill="none" stroke="#333" stroke-width="1.1"/><circle cx="8" cy="8" r="1.6" fill="none" stroke="#333" stroke-width="1.1"/><path d="M4.6 5.1 L6.9 6.9" stroke="#333"/><path d="M2 0.5 V2.5" stroke="#333"/></svg>
<svg class="r" style="left:1041px;top:93px;" width="5" height="3" viewBox="0 0 5 3"><path d="M0 0 H5 L2.5 3 Z" fill="#666"/></svg>
<svg class="r" style="left:1053px;top:87px;" width="12" height="12" viewBox="0 0 12 12"><path d="M1.5 10.5 L6 6" stroke="#333" stroke-width="2.2" stroke-linecap="round"/><path d="M6.5 3.5 A2.8 2.8 0 1 0 8.5 6" fill="none" stroke="#333" stroke-width="1.8"/></svg>
<div class="r" style="left:1066px;top:86px;width:15px;height:15px;background:#E0E8F0;box-sizing:border-box;border:1px solid #A8C8D8;"></div>
<div class="r" style="left:1069px;top:93px;width:9px;height:2px;background:#444;"></div>
<div class="r" style="left:1075px;top:91px;width:3px;height:1px;background:#888;"></div>
<div class="r" style="left:898px;top:104px;width:351px;height:22px;background:#FFFFFF;"></div>
<div class="t" style="left:902px;top:121px;font-size:13px;color:#6D6D72;font-weight:normal;font-family:'Liberation Sans', sans-serif;"><span>Search Solution Explorer (Ctrl+;)</span></div>
<svg class="r" style="left:1230px;top:109px;" width="10" height="11" viewBox="0 0 10 11"><circle cx="6" cy="4" r="3" fill="none" stroke="#333" stroke-width="1.3"/><path d="M4 6 L1 10" stroke="#333" stroke-width="1.6"/></svg>
<svg class="r" style="left:1243px;top:114px;" width="5" height="3" viewBox="0 0 5 3"><path d="M0 0 H5 L2.5 3 Z" fill="#555"/></svg>
<div class="r" style="left:898px;top:127px;width:343px;height:538px;background:#F5F5F5;"></div>
<div class="r" style="left:1241px;top:127px;width:9px;height:538px;background:#F3F3F5;"></div>
<svg class="r" style="left:1242px;top:131px;" width="7" height="5" viewBox="0 0 7 5"><path d="M0.5 4.5 L3.5 0.5 L6.5 4.5 Z" fill="#999"/></svg>
<div class="r" style="left:1242px;top:138px;width:7px;height:462px;background:#C2C3C9;"></div>
<svg class="r" style="left:1242px;top:657px;" width="7" height="5" viewBox="0 0 7 5"><path d="M0.5 0.5 L3.5 4.5 L6.5 0.5 Z" fill="#999"/></svg>
<div class="r" style="left:898px;top:273px;width:340px;height:20px;background:#D0D2DE;"></div>
<svg class="r" style="left:903.5px;top:134.5px;" width="5" height="7" viewBox="0 0 5 7"><path d="M1.2 3.2 V2.1 A1.3 1.4 0 0 1 3.8 2.1 V3.2" fill="none" stroke="#4C6C8C" stroke-width="1"/><rect x="0.5" y="3.1" width="4" height="3.4" rx="0.4" fill="#C8D8E8" stroke="#4C6C8C" stroke-width="1"/></svg>
<svg class="r" style="left:908px;top:133.0px;" width="11" height="10" viewBox="0 0 11 10"><rect x="0.5" y="0.5" width="10" height="9" fill="#fff" stroke="#666" stroke-width="1"/><rect x="0.5" y="0.5" width="10" height="1.8" fill="#666"/><path d="M3 4.5 L5 7 L8 4 L8 8.5" fill="none" stroke="#7050B8" stroke-width="1.2"/></svg>
<div class="t" style="left:922px;top:144.0px;font-size:13.4px;color:#1e1e1e;font-weight:normal;font-family:'Liberation Sans', sans-serif;"><span>Solution 'WebAPIDemo' (1 of 1 project)</span></div>
<svg class="r" style="left:907px;top:156.18px;" width="5" height="5" viewBox="0 0 5 5"><path d="M4.6 0.3 V4.6 H0.3 Z" fill="#111"/></svg>
<svg class="r" style="left:915.5px;top:155.18px;" width="5" height="7" viewBox="0 0 5 7"><path d="M1.2 3.2 V2.1 A1.3 1.4 0 0 1 3.8 2.1 V3.2" fill="none" stroke="#4C6C8C" stroke-width="1"/><rect x="0.5" y="3.1" width="4" height="3.4" rx="0.4" fill="#C8D8E8" stroke="#4C6C8C" stroke-width="1"/></svg>
<svg class="r" style="left:920px;top:153.68px;" width="12" height="11" viewBox="0 0 12 11"><rect x="2.5" y="0.5" width="9" height="8.5" fill="#fff" stroke="#666" stroke-width="1"/><rect x="2.5" y="0.5" width="9" height="1.8" fill="#666"/><circle cx="4" cy="7" r="3.4" fill="#3A7BC8"/><path d="M1.5 7 H6.5" stroke="#fff" stroke-width="0.9"/></svg>
<div class="t" style="left:934px;top:164.68px;font-size:13px;color:#111;font-weight:bold;font-family:'Liberation Sans', sans-serif;"><span>WebAPIDemo</span></div>
<svg class="r" style="left:919px;top:176.36px;" width="5" height="6" viewBox="0 0 5 6"><path d="M0.8 0.8 L3.8 3 L0.8 5.2 Z" fill="none" stroke="#222" stroke-width="1.1"/></svg>
<svg class="r" style="left:931px;top:174.36px;" width="12" height="11" viewBox="0 0 12 11"><path d="M3 7 A2.3 2.3 0 0 1 3 2.8 A3.3 3.3 0 0 1 9.2 3.2 A2 2 0 0 1 9.2 7 Z" fill="none" stroke="#3E9AA8" stroke-width="1.1"/><path d="M6 4.5 V10 M4.5 8.5 L6 10 L7.5 8.5" fill="none" stroke="#3E9AA8" stroke-width="1"/></svg>
<div class="t" style="left:946px;top:185.36px;font-size:13px;color:#1e1e1e;font-weight:normal;font-family:'Liberation Sans', sans-serif;"><span>Connected Services</span></div>
<svg class="r" style="left:919px;top:197.04px;" width="5" height="6" viewBox="0 0 5 6"><path d="M0.8 0.8 L3.8 3 L0.8 5.2 Z" fill="none" stroke="#222" stroke-width="1.1"/></svg>
<svg class="r" style="left:931px;top:196.04px;" width="12" height="8" viewBox="0 0 12 8"><rect x="0.5" y="3.5" width="3.5" height="3.5" fill="none" stroke="#333"/><rect x="6" y="1" width="5" height="6" fill="none" stroke="#333" stroke-width="1.1"/><path d="M2 3 V1 H5" fill="none" stroke="#333"/></svg>
<div class="t" style="left:946px;top:206.04px;font-size:13px;color:#1e1e1e;font-weight:normal;font-family:'Liberation Sans', sans-serif;"><span>Dependencies</span></div>
<svg class="r" style="left:919px;top:218.22px;" width="5" height="5" viewBox="0 0 5 5"><path d="M4.6 0.3 V4.6 H0.3 Z" fill="#111"/></svg>
<svg class="r" style="left:926.5px;top:217.22px;" width="5" height="7" viewBox="0 0 5 7"><path d="M1.2 3.2 V2.1 A1.3 1.4 0 0 1 3.8 2.1 V3.2" fill="none" stroke="#4C6C8C" stroke-width="1"/><rect x="0.5" y="3.1" width="4" height="3.4" rx="0.4" fill="#C8D8E8" stroke="#4C6C8C" stroke-width="1"/></svg>
<svg class="r" style="left:932px;top:215.72px;" width="11" height="11" viewBox="0 0 11 11"><path d="M0.5 1 H4 L5 2 H10.5 V8.5 H0.5 Z" fill="#C8B878" stroke="#A89858" stroke-width="0.7"/><path d="M1 5.5 L4.5 9" stroke="#222" stroke-width="1.8"/></svg>
<div class="t" style="left:946px;top:226.72px;font-size:13px;color:#1e1e1e;font-weight:normal;font-family:'Liberation Sans', sans-serif;"><span>Properties</span></div>
<svg class="r" style="left:938.5px;top:237.9px;" width="5" height="7" viewBox="0 0 5 7"><path d="M1.2 3.2 V2.1 A1.3 1.4 0 0 1 3.8 2.1 V3.2" fill="none" stroke="#4C6C8C" stroke-width="1"/><rect x="0.5" y="3.1" width="4" height="3.4" rx="0.4" fill="#C8D8E8" stroke="#4C6C8C" stroke-width="1"/></svg>
<svg class="r" style="left:945px;top:236.4px;" width="9" height="11" viewBox="0 0 9 11"><path d="M0.5 0.5 H5.5 L8.5 3.5 V10.5 H0.5 Z" fill="#fff" stroke="#666"/><path d="M2.5 3.5 V8 M5.5 4.5 V8" stroke="#666" stroke-width="0.8"/></svg>
<div class="t" style="left:958px;top:247.4px;font-size:13px;color:#1e1e1e;font-weight:normal;font-family:'Liberation Sans', sans-serif;"><span>launchSettings.json</span></div>
<svg class="r" style="left:919px;top:259.58px;" width="5" height="5" viewBox="0 0 5 5"><path d="M4.6 0.3 V4.6 H0.3 Z" fill="#111"/></svg>
<svg class="r" style="left:926.5px;top:258.58px;" width="5" height="7" viewBox="0 0 5 7"><path d="M1.2 3.2 V2.1 A1.3 1.4 0 0 1 3.8 2.1 V3.2" fill="none" stroke="#4C6C8C" stroke-width="1"/><rect x="0.5" y="3.1" width="4" height="3.4" rx="0.4" fill="#C8D8E8" stroke="#4C6C8C" stroke-width="1"/></svg>
<svg class="r" style="left:932px;top:258.08px;" width="10" height="8" viewBox="0 0 10 8"><path d="M0.5 0.5 H4 L5 1.5 H9.5 V7.5 H0.5 Z" fill="#D6B868" stroke="#A88A48" stroke-width="0.8"/></svg>
<div class="t" style="left:946px;top:268.08px;font-size:13px;color:#1e1e1e;font-weight:normal;font-family:'Liberation Sans', sans-serif;"><span>Controllers</span></div>
<svg class="r" style="left:930px;top:279.76px;" width="5" height="6" viewBox="0 0 5 6"><path d="M0.8 0.8 L3.8 3 L0.8 5.2 Z" fill="none" stroke="#222" stroke-width="1.1"/></svg>
<svg class="r" style="left:938px;top:279.76px;" width="7" height="6" viewBox="0 0 7 6"><path d="M0.5 3 L2.5 5 L6.5 0.5" fill="none" stroke="#8A4AA8" stroke-width="1.3"/></svg>
<svg class="r" style="left:944px;top:279.26px;" width="12" height="7" viewBox="0 0 12 7"><path d="M3.6 1.2 A2.4 2.6 0 1 0 3.6 5.8" fill="none" stroke="#2E8A70" stroke-width="1.3"/><path d="M6 2 H10 M6 4.6 H10" stroke="#58707E" stroke-width="1.5"/></svg>
<div class="t" style="left:958px;top:288.76px;font-size:13px;color:#1e1e1e;font-weight:normal;font-family:'Liberation Sans', sans-serif;"><span>ShirtsController.cs</span></div>
<svg class="r" style="left:919px;top:300.94px;" width="5" height="5" viewBox="0 0 5 5"><path d="M4.6 0.3 V4.6 H0.3 Z" fill="#111"/></svg>
<svg class="r" style="left:926.5px;top:299.94px;" width="5" height="7" viewBox="0 0 5 7"><path d="M1.2 3.2 V2.1 A1.3 1.4 0 0 1 3.8 2.1 V3.2" fill="none" stroke="#4C6C8C" stroke-width="1"/><rect x="0.5" y="3.1" width="4" height="3.4" rx="0.4" fill="#C8D8E8" stroke="#4C6C8C" stroke-width="1"/></svg>
<svg class="r" style="left:932px;top:299.44px;" width="10" height="8" viewBox="0 0 10 8"><path d="M0.5 0.5 H4 L5 1.5 H9.5 V7.5 H0.5 Z" fill="#D6B868" stroke="#A88A48" stroke-width="0.8"/></svg>
<div class="t" style="left:946px;top:309.44px;font-size:13px;color:#1e1e1e;font-weight:normal;font-family:'Liberation Sans', sans-serif;"><span>Data</span></div>
<svg class="r" style="left:930px;top:321.12px;" width="5" height="6" viewBox="0 0 5 6"><path d="M0.8 0.8 L3.8 3 L0.8 5.2 Z" fill="none" stroke="#222" stroke-width="1.1"/></svg>
<svg class="r" style="left:937.5px;top:320.62px;" width="5" height="7" viewBox="0 0 5 7"><path d="M1.2 3.2 V2.1 A1.3 1.4 0 0 1 3.8 2.1 V3.2" fill="none" stroke="#4C6C8C" stroke-width="1"/><rect x="0.5" y="3.1" width="4" height="3.4" rx="0.4" fill="#C8D8E8" stroke="#4C6C8C" stroke-width="1"/></svg>
<svg class="r" style="left:944px;top:320.62px;" width="12" height="7" viewBox="0 0 12 7"><path d="M3.6 1.2 A2.4 2.6 0 1 0 3.6 5.8" fill="none" stroke="#2E8A70" stroke-width="1.3"/><path d="M6 2 H10 M6 4.6 H10" stroke="#58707E" stroke-width="1.5"/></svg>
<div class="t" style="left:958px;top:330.12px;font-size:13px;color:#1e1e1e;font-weight:normal;font-family:'Liberation Sans', sans-serif;"><span>ApplicationDbContext.cs</span></div>
<svg class="r" style="left:919px;top:342.3px;" width="5" height="5" viewBox="0 0 5 5"><path d="M4.6 0.3 V4.6 H0.3 Z" fill="#111"/></svg>
<svg class="r" style="left:926.5px;top:341.3px;" width="5" height="7" viewBox="0 0 5 7"><path d="M1.2 3.2 V2.1 A1.3 1.4 0 0 1 3.8 2.1 V3.2" fill="none" stroke="#4C6C8C" stroke-width="1"/><rect x="0.5" y="3.1" width="4" height="3.4" rx="0.4" fill="#C8D8E8" stroke="#4C6C8C" stroke-width="1"/></svg>
<svg class="r" style="left:932px;top:340.8px;" width="10" height="8" viewBox="0 0 10 8"><path d="M0.5 0.5 H4 L5 1.5 H9.5 V7.5 H0.5 Z" fill="#D6B868" stroke="#A88A48" stroke-width="0.8"/></svg>
<div class="t" style="left:946px;top:350.8px;font-size:13px;color:#1e1e1e;font-weight:normal;font-family:'Liberation Sans', sans-serif;"><span>Filters</span></div>
<svg class="r" style="left:931px;top:362.98px;" width="5" height="5" viewBox="0 0 5 5"><path d="M4.6 0.3 V4.6 H0.3 Z" fill="#111"/></svg>
<svg class="r" style="left:938.5px;top:361.98px;" width="5" height="7" viewBox="0 0 5 7"><path d="M1.2 3.2 V2.1 A1.3 1.4 0 0 1 3.8 2.1 V3.2" fill="none" stroke="#4C6C8C" stroke-width="1"/><rect x="0.5" y="3.1" width="4" height="3.4" rx="0.4" fill="#C8D8E8" stroke="#4C6C8C" stroke-width="1"/></svg>
<svg class="r" style="left:944px;top:361.48px;" width="10" height="8" viewBox="0 0 10 8"><path d="M0.5 0.5 H4 L5 1.5 H9.5 V7.5 H0.5 Z" fill="#D6B868" stroke="#A88A48" stroke-width="0.8"/></svg>
<div class="t" style="left:958px;top:371.48px;font-size:13px;color:#1e1e1e;font-weight:normal;font-family:'Liberation Sans', sans-serif;"><span>ActionFilters</span></div>
<svg class="r" style="left:942px;top:383.15999999999997px;" width="5" height="6" viewBox="0 0 5 6"><path d="M0.8 0.8 L3.8 3 L0.8 5.2 Z" fill="none" stroke="#222" stroke-width="1.1"/></svg>
<svg class="r" style="left:949.5px;top:382.65999999999997px;" width="5" height="7" viewBox="0 0 5 7"><path d="M1.2 3.2 V2.1 A1.3 1.4 0 0 1 3.8 2.1 V3.2" fill="none" stroke="#4C6C8C" stroke-width="1"/><rect x="0.5" y="3.1" width="4" height="3.4" rx="0.4" fill="#C8D8E8" stroke="#4C6C8C" stroke-width="1"/></svg>
<svg class="r" style="left:956px;top:382.65999999999997px;" width="12" height="7" viewBox="0 0 12 7"><path d="M3.6 1.2 A2.4 2.6 0 1 0 3.6 5.8" fill="none" stroke="#2E8A70" stroke-width="1.3"/><path d="M6 2 H10 M6 4.6 H10" stroke="#58707E" stroke-width="1.5"/></svg>
<div class="t" style="left:970px;top:392.15999999999997px;font-size:13px;color:#1e1e1e;font-weight:normal;font-family:'Liberation Sans', sans-serif;"><span>Shirt_ValidateCreateShirtFilterAttribute.cs</span></div>
<svg class="r" style="left:942px;top:403.84px;" width="5" height="6" viewBox="0 0 5 6"><path d="M0.8 0.8 L3.8 3 L0.8 5.2 Z" fill="none" stroke="#222" stroke-width="1.1"/></svg>
<svg class="r" style="left:949.5px;top:403.34px;" width="5" height="7" viewBox="0 0 5 7"><path d="M1.2 3.2 V2.1 A1.3 1.4 0 0 1 3.8 2.1 V3.2" fill="none" stroke="#4C6C8C" stroke-width="1"/><rect x="0.5" y="3.1" width="4" height="3.4" rx="0.4" fill="#C8D8E8" stroke="#4C6C8C" stroke-width="1"/></svg>
<svg class="r" style="left:956px;top:403.34px;" width="12" height="7" viewBox="0 0 12 7"><path d="M3.6 1.2 A2.4 2.6 0 1 0 3.6 5.8" fill="none" stroke="#2E8A70" stroke-width="1.3"/><path d="M6 2 H10 M6 4.6 H10" stroke="#58707E" stroke-width="1.5"/></svg>
<div class="t" style="left:970px;top:412.84px;font-size:13px;color:#1e1e1e;font-weight:normal;font-family:'Liberation Sans', sans-serif;"><span>Shirt_ValidateShirtIdFilterAttribute.cs</span></div>
<svg class="r" style="left:942px;top:424.52px;" width="5" height="6" viewBox="0 0 5 6"><path d="M0.8 0.8 L3.8 3 L0.8 5.2 Z" fill="none" stroke="#222" stroke-width="1.1"/></svg>
<svg class="r" style="left:949.5px;top:424.02px;" width="5" height="7" viewBox="0 0 5 7"><path d="M1.2 3.2 V2.1 A1.3 1.4 0 0 1 3.8 2.1 V3.2" fill="none" stroke="#4C6C8C" stroke-width="1"/><rect x="0.5" y="3.1" width="4" height="3.4" rx="0.4" fill="#C8D8E8" stroke="#4C6C8C" stroke-width="1"/></svg>
<svg class="r" style="left:956px;top:424.02px;" width="12" height="7" viewBox="0 0 12 7"><path d="M3.6 1.2 A2.4 2.6 0 1 0 3.6 5.8" fill="none" stroke="#2E8A70" stroke-width="1.3"/><path d="M6 2 H10 M6 4.6 H10" stroke="#58707E" stroke-width="1.5"/></svg>
<div class="t" style="left:970px;top:433.52px;font-size:13px;color:#1e1e1e;font-weight:normal;font-family:'Liberation Sans', sans-serif;"><span>Shirt_ValidateUpdateShirtFilterAttribute.cs</span></div>
<svg class="r" style="left:931px;top:445.2px;" width="5" height="6" viewBox="0 0 5 6"><path d="M0.8 0.8 L3.8 3 L0.8 5.2 Z" fill="none" stroke="#222" stroke-width="1.1"/></svg>
<svg class="r" style="left:938.5px;top:444.7px;" width="5" height="7" viewBox="0 0 5 7"><path d="M1.2 3.2 V2.1 A1.3 1.4 0 0 1 3.8 2.1 V3.2" fill="none" stroke="#4C6C8C" stroke-width="1"/><rect x="0.5" y="3.1" width="4" height="3.4" rx="0.4" fill="#C8D8E8" stroke="#4C6C8C" stroke-width="1"/></svg>
<svg class="r" style="left:944px;top:444.2px;" width="10" height="8" viewBox="0 0 10 8"><path d="M0.5 0.5 H4 L5 1.5 H9.5 V7.5 H0.5 Z" fill="#D6B868" stroke="#A88A48" stroke-width="0.8"/></svg>
<div class="t" style="left:958px;top:454.2px;font-size:13px;color:#1e1e1e;font-weight:normal;font-family:'Liberation Sans', sans-serif;"><span>ExceptionFilters</span></div>
<svg class="r" style="left:919px;top:466.38px;" width="5" height="5" viewBox="0 0 5 5"><path d="M4.6 0.3 V4.6 H0.3 Z" fill="#111"/></svg>
<svg class="r" style="left:926.5px;top:465.38px;" width="5" height="7" viewBox="0 0 5 7"><path d="M1.2 3.2 V2.1 A1.3 1.4 0 0 1 3.8 2.1 V3.2" fill="none" stroke="#4C6C8C" stroke-width="1"/><rect x="0.5" y="3.1" width="4" height="3.4" rx="0.4" fill="#C8D8E8" stroke="#4C6C8C" stroke-width="1"/></svg>
<svg class="r" style="left:932px;top:464.88px;" width="10" height="8" viewBox="0 0 10 8"><path d="M0.5 0.5 H4 L5 1.5 H9.5 V7.5 H0.5 Z" fill="#D6B868" stroke="#A88A48" stroke-width="0.8"/></svg>
<div class="t" style="left:946px;top:474.88px;font-size:13px;color:#1e1e1e;font-weight:normal;font-family:'Liberation Sans', sans-serif;"><span>Migrations</span></div>
<svg class="r" style="left:930px;top:486.56px;" width="5" height="6" viewBox="0 0 5 6"><path d="M0.8 0.8 L3.8 3 L0.8 5.2 Z" fill="none" stroke="#222" stroke-width="1.1"/></svg>
<svg class="r" style="left:937.5px;top:486.06px;" width="5" height="7" viewBox="0 0 5 7"><path d="M1.2 3.2 V2.1 A1.3 1.4 0 0 1 3.8 2.1 V3.2" fill="none" stroke="#4C6C8C" stroke-width="1"/><rect x="0.5" y="3.1" width="4" height="3.4" rx="0.4" fill="#C8D8E8" stroke="#4C6C8C" stroke-width="1"/></svg>
<svg class="r" style="left:944px;top:486.06px;" width="12" height="7" viewBox="0 0 12 7"><path d="M3.6 1.2 A2.4 2.6 0 1 0 3.6 5.8" fill="none" stroke="#2E8A70" stroke-width="1.3"/><path d="M6 2 H10 M6 4.6 H10" stroke="#58707E" stroke-width="1.5"/></svg>
<div class="t" style="left:958px;top:495.56px;font-size:13px;color:#1e1e1e;font-weight:normal;font-family:'Liberation Sans', sans-serif;"><span>20230531015432_Init.cs</span></div>
<svg class="r" style="left:930px;top:507.24px;" width="5" height="6" viewBox="0 0 5 6"><path d="M0.8 0.8 L3.8 3 L0.8 5.2 Z" fill="none" stroke="#222" stroke-width="1.1"/></svg>
<svg class="r" style="left:937.5px;top:506.74px;" width="5" height="7" viewBox="0 0 5 7"><path d="M1.2 3.2 V2.1 A1.3 1.4 0 0 1 3.8 2.1 V3.2" fill="none" stroke="#4C6C8C" stroke-width="1"/><rect x="0.5" y="3.1" width="4" height="3.4" rx="0.4" fill="#C8D8E8" stroke="#4C6C8C" stroke-width="1"/></svg>
<svg class="r" style="left:944px;top:506.74px;" width="12" height="7" viewBox="0 0 12 7"><path d="M3.6 1.2 A2.4 2.6 0 1 0 3.6 5.8" fill="none" stroke="#2E8A70" stroke-width="1.3"/><path d="M6 2 H10 M6 4.6 H10" stroke="#58707E" stroke-width="1.5"/></svg>
<div class="t" style="left:958px;top:516.24px;font-size:13px;color:#1e1e1e;font-weight:normal;font-family:'Liberation Sans', sans-serif;"><span>ApplicationDbContextModelSnapshot.cs</span></div>
<svg class="r" style="left:919px;top:528.4200000000001px;" width="5" height="5" viewBox="0 0 5 5"><path d="M4.6 0.3 V4.6 H0.3 Z" fill="#111"/></svg>
<svg class="r" style="left:926.5px;top:527.4200000000001px;" width="5" height="7" viewBox="0 0 5 7"><path d="M1.2 3.2 V2.1 A1.3 1.4 0 0 1 3.8 2.1 V3.2" fill="none" stroke="#4C6C8C" stroke-width="1"/><rect x="0.5" y="3.1" width="4" height="3.4" rx="0.4" fill="#C8D8E8" stroke="#4C6C8C" stroke-width="1"/></svg>
<svg class="r" style="left:932px;top:526.9200000000001px;" width="10" height="8" viewBox="0 0 10 8"><path d="M0.5 0.5 H4 L5 1.5 H9.5 V7.5 H0.5 Z" fill="#D6B868" stroke="#A88A48" stroke-width="0.8"/></svg>
<div class="t" style="left:946px;top:536.9200000000001px;font-size:13px;color:#1e1e1e;font-weight:normal;font-family:'Liberation Sans', sans-serif;"><span>Models</span></div>
<svg class="r" style="left:931px;top:549.1px;" width="5" height="5" viewBox="0 0 5 5"><path d="M4.6 0.3 V4.6 H0.3 Z" fill="#111"/></svg>
<svg class="r" style="left:938.5px;top:548.1px;" width="5" height="7" viewBox="0 0 5 7"><path d="M1.2 3.2 V2.1 A1.3 1.4 0 0 1 3.8 2.1 V3.2" fill="none" stroke="#4C6C8C" stroke-width="1"/><rect x="0.5" y="3.1" width="4" height="3.4" rx="0.4" fill="#C8D8E8" stroke="#4C6C8C" stroke-width="1"/></svg>
<svg class="r" style="left:944px;top:547.6px;" width="10" height="8" viewBox="0 0 10 8"><path d="M0.5 0.5 H4 L5 1.5 H9.5 V7.5 H0.5 Z" fill="#D6B868" stroke="#A88A48" stroke-width="0.8"/></svg>
<div class="t" style="left:958px;top:557.6px;font-size:13px;color:#1e1e1e;font-weight:normal;font-family:'Liberation Sans', sans-serif;"><span>Repositories</span></div>
<svg class="r" style="left:942px;top:569.28px;" width="5" height="6" viewBox="0 0 5 6"><path d="M0.8 0.8 L3.8 3 L0.8 5.2 Z" fill="none" stroke="#222" stroke-width="1.1"/></svg>
<svg class="r" style="left:949.5px;top:568.78px;" width="5" height="7" viewBox="0 0 5 7"><path d="M1.2 3.2 V2.1 A1.3 1.4 0 0 1 3.8 2.1 V3.2" fill="none" stroke="#4C6C8C" stroke-width="1"/><rect x="0.5" y="3.1" width="4" height="3.4" rx="0.4" fill="#C8D8E8" stroke="#4C6C8C" stroke-width="1"/></svg>
<svg class="r" style="left:956px;top:568.78px;" width="12" height="7" viewBox="0 0 12 7"><path d="M3.6 1.2 A2.4 2.6 0 1 0 3.6 5.8" fill="none" stroke="#2E8A70" stroke-width="1.3"/><path d="M6 2 H10 M6 4.6 H10" stroke="#58707E" stroke-width="1.5"/></svg>
<div class="t" style="left:970px;top:578.28px;font-size:13px;color:#1e1e1e;font-weight:normal;font-family:'Liberation Sans', sans-serif;"><span>ShirtRepository.cs</span></div>
<svg class="r" style="left:931px;top:590.46px;" width="5" height="5" viewBox="0 0 5 5"><path d="M4.6 0.3 V4.6 H0.3 Z" fill="#111"/></svg>
<svg class="r" style="left:938.5px;top:589.46px;" width="5" height="7" viewBox="0 0 5 7"><path d="M1.2 3.2 V2.1 A1.3 1.4 0 0 1 3.8 2.1 V3.2" fill="none" stroke="#4C6C8C" stroke-width="1"/><rect x="0.5" y="3.1" width="4" height="3.4" rx="0.4" fill="#C8D8E8" stroke="#4C6C8C" stroke-width="1"/></svg>
<svg class="r" style="left:944px;top:588.96px;" width="10" height="8" viewBox="0 0 10 8"><path d="M0.5 0.5 H4 L5 1.5 H9.5 V7.5 H0.5 Z" fill="#D6B868" stroke="#A88A48" stroke-width="0.8"/></svg>
<div class="t" style="left:958px;top:598.96px;font-size:13px;color:#1e1e1e;font-weight:normal;font-family:'Liberation Sans', sans-serif;"><span>Validations</span></div>
<svg class="r" style="left:942px;top:610.64px;" width="5" height="6" viewBox="0 0 5 6"><path d="M0.8 0.8 L3.8 3 L0.8 5.2 Z" fill="none" stroke="#222" stroke-width="1.1"/></svg>
<svg class="r" style="left:949.5px;top:610.14px;" width="5" height="7" viewBox="0 0 5 7"><path d="M1.2 3.2 V2.1 A1.3 1.4 0 0 1 3.8 2.1 V3.2" fill="none" stroke="#4C6C8C" stroke-width="1"/><rect x="0.5" y="3.1" width="4" height="3.4" rx="0.4" fill="#C8D8E8" stroke="#4C6C8C" stroke-width="1"/></svg>
<svg class="r" style="left:956px;top:610.14px;" width="12" height="7" viewBox="0 0 12 7"><path d="M3.6 1.2 A2.4 2.6 0 1 0 3.6 5.8" fill="none" stroke="#2E8A70" stroke-width="1.3"/><path d="M6 2 H10 M6 4.6 H10" stroke="#58707E" stroke-width="1.5"/></svg>
<div class="t" style="left:970px;top:619.64px;font-size:13px;color:#1e1e1e;font-weight:normal;font-family:'Liberation Sans', sans-serif;"><span>Shirt_EnsureCorrectSizingAttribute.cs</span></div>
<svg class="r" style="left:930px;top:631.3199999999999px;" width="5" height="6" viewBox="0 0 5 6"><path d="M0.8 0.8 L3.8 3 L0.8 5.2 Z" fill="none" stroke="#222" stroke-width="1.1"/></svg>
<svg class="r" style="left:937.5px;top:630.8199999999999px;" width="5" height="7" viewBox="0 0 5 7"><path d="M1.2 3.2 V2.1 A1.3 1.4 0 0 1 3.8 2.1 V3.2" fill="none" stroke="#4C6C8C" stroke-width="1"/><rect x="0.5" y="3.1" width="4" height="3.4" rx="0.4" fill="#C8D8E8" stroke="#4C6C8C" stroke-width="1"/></svg>
<svg class="r" style="left:944px;top:630.8199999999999px;" width="12" height="7" viewBox="0 0 12 7"><path d="M3.6 1.2 A2.4 2.6 0 1 0 3.6 5.8" fill="none" stroke="#2E8A70" stroke-width="1.3"/><path d="M6 2 H10 M6 4.6 H10" stroke="#58707E" stroke-width="1.5"/></svg>
<div class="t" style="left:958px;top:640.3199999999999px;font-size:13px;color:#1e1e1e;font-weight:normal;font-family:'Liberation Sans', sans-serif;"><span>Shirt.cs</span></div>
<svg class="r" style="left:925.5px;top:651.5px;" width="5" height="7" viewBox="0 0 5 7"><path d="M1.2 3.2 V2.1 A1.3 1.4 0 0 1 3.8 2.1 V3.2" fill="none" stroke="#4C6C8C" stroke-width="1"/><rect x="0.5" y="3.1" width="4" height="3.4" rx="0.4" fill="#C8D8E8" stroke="#4C6C8C" stroke-width="1"/></svg>
<svg class="r" style="left:932px;top:650.0px;" width="11" height="10" viewBox="0 0 11 10"><path d="M0.5 1 H4 L5 2 H9.5 V7.5 H0.5 Z" fill="#F2F2F2" stroke="#A8A8A8" stroke-width="0.8"/><path d="M6 6 L9 9 M9 6 L6 9" stroke="#D03030" stroke-width="1"/></svg>
<div class="t" style="left:946px;top:661.0px;font-size:13px;color:#1e1e1e;font-weight:normal;font-family:'Liberation Sans', sans-serif;"><span>NewFolder</span></div>
<div class="r" style="left:1252px;top:62px;width:28px;height:593px;background:#EEEEF2;"></div>
<div class="r" style="left:1276px;top:62px;width:4px;height:75px;background:#D5D5DD;"></div>
<div class="r" style="left:1276px;top:145px;width:4px;height:60px;background:#D5D5DD;"></div>
<div class="r" style="left:1276px;top:212px;width:4px;height:71px;background:#D5D5DD;"></div>
<div class="r" style="left:1276px;top:290px;width:4px;height:60px;background:#D5D5DD;"></div>
<div class="r" style="left:1270px;top:62px;transform-origin:0 0;transform:rotate(90deg);font-size:12.6px;color:#3c3c3c;white-space:pre;line-height:13px;">Notifications</div>
<div class="r" style="left:1270px;top:145px;transform-origin:0 0;transform:rotate(90deg);font-size:12.6px;color:#3c3c3c;white-space:pre;line-height:13px;">Properties</div>
<div class="r" style="left:1270px;top:212px;transform-origin:0 0;transform:rotate(90deg);font-size:12.6px;color:#3c3c3c;white-space:pre;line-height:13px;">Git Changes</div>
<div class="r" style="left:1270px;top:290px;transform-origin:0 0;transform:rotate(90deg);font-size:12.6px;color:#3c3c3c;white-space:pre;line-height:13px;">Class View</div>
<div class="r" style="left:30px;top:655px;width:863px;height:10px;background:#F3F3F5;"></div>
<div class="r" style="left:30px;top:665px;width:867px;height:1px;background:#E0E0E6;"></div>
<div class="r" style="left:30px;top:656px;width:37px;height:9px;background:#FFFFFF;"></div>
<div class="t" style="left:32px;top:663px;font-size:7.4px;color:#3a3a3a;font-weight:bold;font-family:'Liberation Sans', sans-serif;"><span>110 %</span></div>
<svg class="r" style="left:60px;top:659px;" width="5" height="3" viewBox="0 0 5 3"><path d="M0 0 H5 L2.5 3 Z" fill="#555"/></svg>
<svg class="r" style="left:71px;top:655px;" width="10" height="11" viewBox="0 0 10 11"><circle cx="5" cy="5.5" r="4" fill="#9AA8D8"/><path d="M3 5 H7" stroke="#fff"/></svg>
<svg class="r" style="left:97px;top:656px;" width="10" height="10" viewBox="0 0 10 10"><circle cx="5" cy="5" r="4.3" fill="#2A9D4A"/><path d="M2.8 5 L4.5 6.8 L7.5 3.5" fill="none" stroke="#fff" stroke-width="1.2"/></svg>
<div class="t" style="left:109px;top:663px;font-size:7.4px;color:#3a3a3a;font-weight:bold;font-family:'Liberation Sans', sans-serif;"><span>No issues found</span></div>
<div class="r" style="left:203px;top:657px;width:1px;height:9px;background:#C8C8D0;"></div>
<svg class="r" style="left:213px;top:655px;" width="11" height="11" viewBox="0 0 11 11"><path d="M1 5 L4 9 L9 1" fill="none" stroke="#8A8A30" stroke-width="1.6"/><circle cx="3" cy="3" r="1" fill="#A0A040"/></svg>
<svg class="r" style="left:226px;top:659px;" width="5" height="3" viewBox="0 0 5 3"><path d="M0 0 H5 L2.5 3 Z" fill="#333"/></svg>
<div class="t" style="left:778px;top:663px;font-size:7.4px;color:#3a3a3a;font-weight:bold;font-family:'Liberation Sans', sans-serif;"><span>Ln: 32</span></div>
<div class="t" style="left:810px;top:663px;font-size:7.4px;color:#3a3a3a;font-weight:bold;font-family:'Liberation Sans', sans-serif;"><span>Ch: 57</span></div>
<div class="t" style="left:844px;top:663px;font-size:7.4px;color:#3a3a3a;font-weight:bold;font-family:'Liberation Sans', sans-serif;"><span>SPC</span></div>
<div class="t" style="left:870px;top:663px;font-size:7.4px;color:#3a3a3a;font-weight:bold;font-family:'Liberation Sans', sans-serif;"><span>CRLF</span></div>
<div class="t" style="left:29px;top:686px;font-size:13px;color:#3A3A3A;font-weight:normal;font-family:'Liberation Sans', sans-serif;"><span>Error List</span></div>
<div class="r" style="left:28px;top:692px;width:54px;height:3px;background:#D7D7DE;"></div>
<div class="t" style="left:88px;top:686px;font-size:13px;color:#3A3A3A;font-weight:normal;font-family:'Liberation Sans', sans-serif;"><span>Command Window</span></div>
<div class="r" style="left:87px;top:692px;width:115px;height:3px;background:#D7D7DE;"></div>
<div class="t" style="left:209px;top:686px;font-size:13px;color:#3A3A3A;font-weight:normal;font-family:'Liberation Sans', sans-serif;"><span>Output</span></div>
<div class="r" style="left:208px;top:692px;width:45px;height:3px;background:#D7D7DE;"></div>
<div class="t" style="left:259px;top:686px;font-size:13px;color:#3A3A3A;font-weight:normal;font-family:'Liberation Sans', sans-serif;"><span>Package Manager Console</span></div>
<div class="r" style="left:258px;top:692px;width:154px;height:3px;background:#D7D7DE;"></div>
<div class="r" style="left:0px;top:695px;width:1280px;height:23px;background:#066CC0;"></div>
<div class="r" style="left:0px;top:718px;width:1280px;height:2px;background:#10243C;"></div>
<div class="r" style="left:32px;top:718px;width:192px;height:2px;background:#F0F0F0;"></div>
<svg class="r" style="left:6px;top:701px;" width="12" height="12" viewBox="0 0 12 12"><rect x="0.5" y="1.5" width="10" height="9" fill="none" stroke="#fff" stroke-width="1"/><path d="M2.5 6 L4.5 8 L8.5 3" fill="none" stroke="#fff" stroke-width="1.2"/></svg>
<div class="t" style="left:19px;top:713px;font-size:13px;color:#FFFFFF;font-weight:normal;font-family:'Liberation Sans', sans-serif;"><span>Ready</span></div>
<svg class="r" style="left:877px;top:702px;" width="12" height="12" viewBox="0 0 12 12"><path d="M1 6 V11 H11 V6" fill="none" stroke="#fff" stroke-width="1.1"/><path d="M6 1 V8 M3.5 3.5 L6 1 L8.5 3.5" fill="none" stroke="#fff" stroke-width="1.1"/></svg>
<svg class="r" style="left:948px;top:701px;" width="8" height="12" viewBox="0 0 8 12"><path d="M2 11 V1 M0 3 L2 1 L4 3 M6 1 V11 M4 9 L6 11 L8 9" fill="none" stroke="#fff" stroke-width="1"/></svg>
<div class="t" style="left:960px;top:713px;font-size:13px;color:#FFFFFF;font-weight:normal;font-family:'Liberation Sans', sans-serif;"><span>0 / 0</span></div>
<svg class="r" style="left:992px;top:706px;" width="5" height="3" viewBox="0 0 5 3"><path d="M0 3 H5 L2.5 0 Z" fill="#fff"/></svg>
<svg class="r" style="left:1012px;top:701px;" width="12" height="12" viewBox="0 0 12 12"><path d="M2 10 L9 3 L11 5 L4 12 Z M1 11 L2 10" fill="none" stroke="#fff" stroke-width="1.1"/></svg>
<div class="t" style="left:1027px;top:713px;font-size:13px;color:#FFFFFF;font-weight:normal;font-family:'Liberation Sans', sans-serif;"><span>1</span></div>
<svg class="r" style="left:1048px;top:701px;" width="10" height="12" viewBox="0 0 10 12"><circle cx="3" cy="2.5" r="1.7" fill="none" stroke="#fff"/><circle cx="3" cy="10" r="1.7" fill="none" stroke="#fff"/><circle cx="8" cy="5" r="1.7" fill="none" stroke="#fff"/><path d="M3 4 V8.3 M8 6.7 Q8 8 4 9" fill="none" stroke="#fff"/></svg>
<div class="t" style="left:1062px;top:713px;font-size:13px;color:#FFFFFF;font-weight:normal;font-family:'Liberation Sans', sans-serif;"><span>master</span></div>
<svg class="r" style="left:1106px;top:706px;" width="5" height="3" viewBox="0 0 5 3"><path d="M0 3 H5 L2.5 0 Z" fill="#fff"/></svg>
<svg class="r" style="left:1128px;top:701px;" width="12" height="12" viewBox="0 0 12 12"><rect x="0.5" y="0.5" width="10" height="10" fill="none" stroke="#fff"/><path d="M0.5 3 H10.5" stroke="#fff"/><circle cx="6" cy="7" r="2" fill="#fff"/></svg>
<div class="t" style="left:1145px;top:713px;font-size:13px;color:#FFFFFF;font-weight:normal;font-family:'Liberation Sans', sans-serif;"><span>WebAPIDemo</span></div>
<div class="t" style="left:1227px;top:709px;font-size:15px;color:rgba(255,255,255,0.55);font-weight:normal;font-family:'Liberation Sans', sans-serif;"><span>ūdemy</span></div>
<svg class="r" style="left:1254px;top:704px;" width="14" height="14" viewBox="0 0 14 14"><circle cx="7" cy="7" r="6.3" fill="#D02828"/><text x="4.5" y="10.5" font-size="9" fill="#fff" font-family="Liberation Sans">1</text></svg>
</body></html>
